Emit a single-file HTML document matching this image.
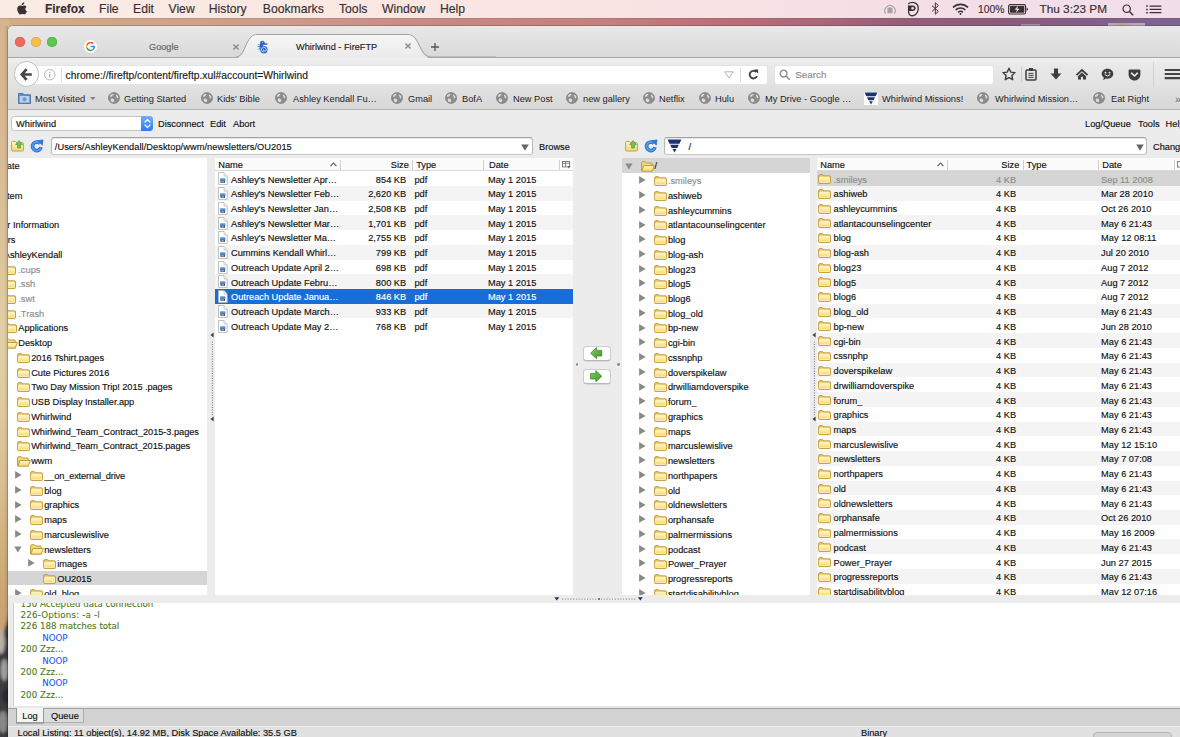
<!DOCTYPE html>
<html><head><meta charset="utf-8"><title>Whirlwind - FireFTP</title>
<style>
html,body{margin:0;padding:0}
body{width:1180px;height:737px;overflow:hidden;position:relative;background:#c59a92;font-family:"Liberation Sans",sans-serif;font-size:9.25px;color:#111;-webkit-font-smoothing:antialiased}
div,span,svg{position:absolute;white-space:nowrap}
.ic{overflow:visible}
#desk{left:0;top:0;width:1180px;height:737px;background:linear-gradient(90deg,#d1ad88 0,#cfa58a 150px,#cb9a8c 300px,#c88a86 420px,#c4807f 600px,#b56d78 750px,#a8667a 830px,#955e79 900px,#8a5c7c 1000px,#82608a 1100px,#7b6690 1180px)}
#wood{left:0;top:17.6px;width:9px;height:720px;background:linear-gradient(180deg,#d6b48d 0,#d8b992 110px,#dcc39b 230px,#e3cfa6 320px,#dfc89e 400px,#d8bd90 470px,#cfab76 550px,#c9a274 600px,#c9a274 720px)}
#gl{left:0;top:17.6px;width:1180px;height:1.6px;background:linear-gradient(180deg,rgba(110,50,40,.28),rgba(110,50,40,0))}
#wsh{left:4px;top:26px;width:4px;height:711px;background:linear-gradient(90deg,rgba(0,0,0,0),rgba(0,0,0,.13))}
#menubar{left:0;top:0;width:1180px;height:17.6px;background:linear-gradient(90deg,#faece4 0,#fae7e2 400px,#f8e2e3 700px,#f4dfe6 900px,#f1deea 1180px);font-size:12.2px;color:#372f31;-webkit-text-stroke:0.15px #372f31}
#menubar span{top:2px;line-height:14px}
#win{left:8px;top:25.6px;width:1180px;height:720px;background:#ececec;border-radius:5px 0 0 0;box-shadow:0 0 0 .5px rgba(0,0,0,.35)}
#tabbar{left:8px;top:25.6px;width:1172px;height:31.4px;border-radius:5px 0 0 0;background:linear-gradient(180deg,#e9e9e9,#d9d9d9);border-bottom:1px solid #a9a9a9}
#navbar{left:8px;top:58px;width:1172px;height:51px;background:linear-gradient(180deg,#f0f0f0 0,#e9e9e9 16%,#e2e2e2 55%,#d7d7d7 100%);border-bottom:1px solid #b5b5b5}
.tl{width:9.9px;height:9.9px;border-radius:50%;top:37px}
.field{background:#fff;border:1px solid #c3c3c3;border-radius:3px;box-sizing:border-box}
.bm{top:93px;line-height:12px;font-size:9.25px;color:#1d1d1d}
.t{line-height:12px;height:12px;-webkit-text-stroke:0.15px currentColor}
.g{color:#8e8e8e}
.row{left:0;height:14.74px;width:100%}
.pane{background:#fff;overflow:hidden}
.hdr{background:#fbfbfb;border-bottom:1px solid #d9d9d9;box-sizing:border-box}
.sep{width:1px;background:#d0d0d0}
.log{font-family:"DejaVu Sans","Liberation Sans",sans-serif;font-size:8.7px;line-height:11px;-webkit-text-stroke:0.12px currentColor}
</style></head><body>
<svg width="0" height="0" style="left:0;top:0"><defs>
<linearGradient id="fg" x1="0" y1="0" x2="0" y2="1"><stop offset="0" stop-color="#fff8cc"/><stop offset="0.5" stop-color="#fbe99a"/><stop offset="1" stop-color="#f6d874"/></linearGradient>
<linearGradient id="ag" x1="0" y1="0" x2="1" y2="1"><stop offset="0" stop-color="#8fce74"/><stop offset="0.5" stop-color="#5fb045"/><stop offset="1" stop-color="#4a9a33"/></linearGradient>
</defs></svg>
<div id="desk"></div><div id="wood"></div>
<svg style="left:0;top:590px" width="9" height="147" viewBox="0 0 9 147"><defs><filter id="bl" x="-50%" y="-10%" width="200%" height="120%"><feGaussianBlur stdDeviation="1.6"/></filter></defs>
<g filter="url(#bl)"><polygon points="12,18 -3,64 -3,160 12,160" fill="#3b3b3f"/><ellipse cx="1" cy="52" rx="4" ry="12" fill="#b7afa4"/><ellipse cx="4.5" cy="80" rx="4" ry="11" fill="#a3a19f"/><ellipse cx="6" cy="106" rx="4" ry="8" fill="#2c2c30"/><ellipse cx="3" cy="132" rx="5" ry="11" fill="#8a8987"/></g></svg>
<div id="wsh"></div><div id="gl"></div>

<div id="menubar">
<svg class="ic" style="left:16.2px;top:2px" width="12" height="14" viewBox="0 0 12 14"><path d="M8.3 0.2C8.4 1.2 7.9 2 7.4 2.5C6.9 3 6.2 3.4 5.6 3.3C5.5 2.4 6 1.6 6.4 1.2C6.9 0.7 7.7 0.3 8.3 0.2ZM10.6 4.9C10.4 5 9.3 5.6 9.3 7C9.3 8.6 10.8 9.2 10.9 9.2C10.9 9.3 10.6 10.2 10 11C9.5 11.7 9 12.4 8.2 12.4C7.4 12.4 7.2 12 6.3 12C5.4 12 5.1 12.4 4.4 12.4C3.6 12.4 3.1 11.7 2.5 10.9C1.8 9.9 1.2 8.4 1.2 7C1.2 4.7 2.7 3.5 4.1 3.5C4.9 3.5 5.6 4 6.1 4C6.6 4 7.4 3.4 8.3 3.4C8.7 3.4 9.9 3.5 10.6 4.9Z" fill="#3a3134"/></svg>
<span style="left:45px;font-weight:bold;font-size:11.9px;">Firefox</span>
<span style="left:99px;">File</span>
<span style="left:133px;">Edit</span>
<span style="left:168.5px;">View</span>
<span style="left:208.8px;">History</span>
<span style="left:262.8px;">Bookmarks</span>
<span style="left:339px;">Tools</span>
<span style="left:382px;">Window</span>
<span style="left:440px;">Help</span>
<span style="left:978px;font-size:10.3px;top:2.6px">100%</span>
<span style="left:1039.5px;font-size:11.8px">Thu 3:23 PM</span>
<svg class="ic" style="left:884px;top:3px" width="12" height="12" viewBox="0 0 12 12"><path d="M1.6 10.6A5.2 5.2 0 1 1 10.4 10.6" fill="none" stroke="#a89fa5" stroke-width="1.1"/><rect x="3.4" y="4.6" width="5.2" height="5.6" rx="0.8" fill="#aaa1a7"/></svg>
<svg class="ic" style="left:906px;top:1px" width="14" height="16" viewBox="0 0 14 16"><path d="M2.2 3C5 0.6 10.6 0.8 12 5C13.2 9 11 13.6 7.4 14.6C4.6 15.2 2.6 13.6 2.6 11V4.6" fill="none" stroke="#3a3134" stroke-width="1.3"/><path d="M2.4 4.4H6.4C8.6 4.4 9.6 5.6 9.6 7.2C9.6 8.8 8.4 10 6.4 10H2.6Z" fill="#3a3134"/><circle cx="6.6" cy="7.2" r="1.3" fill="#f3dfe6"/></svg>
<svg class="ic" style="left:931px;top:2.4px" width="9" height="13" viewBox="0 0 9 13"><path d="M1 3.6L7.4 9.4L4.3 12.2V0.8L7.4 3.6L1 9.4" fill="none" stroke="#3a3134" stroke-width="1"/></svg>
<svg class="ic" style="left:952px;top:2.6px" width="17" height="12" viewBox="0 0 17 12"><path d="M1 4.4A10.6 10.6 0 0 1 16 4.4" fill="none" stroke="#3a3134" stroke-width="1.7"/><path d="M3.6 7A7 7 0 0 1 13.4 7" fill="none" stroke="#3a3134" stroke-width="1.7"/><path d="M6.1 9.4A3.5 3.5 0 0 1 10.9 9.4" fill="none" stroke="#3a3134" stroke-width="1.6"/><circle cx="8.5" cy="11" r="1" fill="#3a3134"/></svg>
<svg class="ic" style="left:1008px;top:3.6px" width="21" height="11" viewBox="0 0 21 11"><rect x="0.6" y="0.6" width="17" height="9.4" rx="1.6" fill="none" stroke="#3a3134" stroke-width="1.1"/><rect x="1.9" y="1.9" width="14.4" height="6.8" rx="0.6" fill="#3a3134"/><path d="M18.6 3.6V7Q20 6.6 20 5.3Q20 4 18.6 3.6Z" fill="#3a3134"/><path d="M10.2 1.6L6.6 5.8H9L7.8 9L11.6 4.8H9.2Z" fill="#f3dfe6"/></svg>
<svg class="ic" style="left:1122px;top:3.6px" width="12" height="12" viewBox="0 0 12 12"><circle cx="4.7" cy="4.7" r="3.7" fill="none" stroke="#3a3134" stroke-width="1.2"/><path d="M7.4 7.4L11.2 11.2" stroke="#3a3134" stroke-width="1.4"/></svg>
<svg class="ic" style="left:1146px;top:4.6px" width="16" height="9" viewBox="0 0 16 9"><path d="M3.6 1.1H15.4M3.6 4.4H15.4M3.6 7.7H15.4" stroke="#3a3134" stroke-width="1.3"/><path d="M0.2 1.1H1.8M0.2 4.4H1.8M0.2 7.7H1.8" stroke="#3a3134" stroke-width="1.5"/></svg>
</div>
<div style="left:1021px;top:23.6px;width:19px;height:2px;background:rgba(255,255,255,.28)"></div><div style="left:1108px;top:22.8px;width:37px;height:2.8px;background:linear-gradient(90deg,#f3eee9,#e9d9a8 40%,#f1ece6 70%,#eee);opacity:.5"></div>
<div id="win"></div><div id="tabbar"></div><div id="navbar"></div>
<div class="tl" style="left:14.8px;background:#ec6b60;box-shadow:inset 0 0 0 .5px #d55146"></div>
<div class="tl" style="left:31.1px;background:#f4bf4f;box-shadow:inset 0 0 0 .5px #d9a13b"></div>
<div class="tl" style="left:47.4px;background:#61c454;box-shadow:inset 0 0 0 .5px #4aa73c"></div>
<svg class="ic" style="left:236px;top:33px" width="260" height="25" viewBox="0 0 260 25"><defs><linearGradient id="tg" x1="0" y1="0" x2="0" y2="1"><stop offset="0" stop-color="#f6f6f6"/><stop offset="1" stop-color="#ebebeb"/></linearGradient></defs><path d="M0 24C10 24 9 1.5 21 1.5H172C184 1.5 183 24 195 24H260" fill="none" stroke="#a0a0a0" stroke-width="1"/><path d="M1 25C10.6 24.4 9.8 2 21 2H172C183.2 2 182.4 24.4 194 25Z" fill="url(#tg)"/></svg>
<svg class="ic" style="left:84px;top:40px" width="13" height="13" viewBox="0 0 13 13"><circle cx="6.5" cy="6.5" r="6.5" fill="#fff"/><path d="M6.5 2.6A3.9 3.9 0 0 0 3 4.8" stroke="#ea4335" stroke-width="1.5" fill="none"/><path d="M3 4.8A3.9 3.9 0 0 0 3 8.2" stroke="#fbbc05" stroke-width="1.5" fill="none"/><path d="M3 8.2A3.9 3.9 0 0 0 9 9.5" stroke="#34a853" stroke-width="1.5" fill="none"/><path d="M9 9.5A3.9 3.9 0 0 0 10.3 6.5H6.6" stroke="#4285f4" stroke-width="1.5" fill="none"/><path d="M6.5 2.6A3.9 3.9 0 0 1 9.2 3.7" stroke="#ea4335" stroke-width="1.5" fill="none"/></svg>
<span class="t" style="left:149px;top:41px;color:#666;font-size:9.2px">Google</span>
<svg class="ic" style="left:233px;top:43.6px" width="6" height="6" viewBox="0 0 6 6"><path d="M0.4 0.4L5.6 5.6M5.6 0.4L0.4 5.6" stroke="#8c8c8c" stroke-width="1.4"/></svg>
<svg class="ic" style="left:255.6px;top:39.8px" width="12" height="14" viewBox="0 0 12 14"><g fill="#2b68c2"><circle cx="7.9" cy="9.7" r="3.7"/><ellipse cx="6.3" cy="2.8" rx="2.3" ry="2.1"/><path d="M7.5 2.4L11.7 3.7L11.2 4.8L7.2 4.7Z"/><path d="M4.1 3.4C3.5 5.4 3.9 7.6 5 8.8L7.8 6.4C6.9 5.8 7 4.8 7.7 4.3Z"/><path d="M4 4.4L1.4 3.9L3.8 5.6ZM3.9 6.1L0.8 6.6L4 7.4ZM4.3 8L1.4 9.3L4.9 9.4Z"/></g><path d="M7.9 12.1A2.4 2.4 0 1 1 10.2 9.2A1.4 1.4 0 1 1 7.6 9.4" fill="none" stroke="#d5e6f9" stroke-width="0.85"/><circle cx="6.6" cy="2.3" r="0.5" fill="#d5e6f9"/></svg>
<span class="t" style="left:296px;top:41px;color:#222;font-size:9.2px">Whirlwind - FireFTP</span>
<svg class="ic" style="left:405.2px;top:43.4px" width="6" height="6" viewBox="0 0 6 6"><path d="M0.4 0.4L5.6 5.6M5.6 0.4L0.4 5.6" stroke="#8c8c8c" stroke-width="1.4"/></svg>
<svg class="ic" style="left:431px;top:43.3px" width="8" height="8" viewBox="0 0 8 8"><path d="M4 0V8M0 4H8" stroke="#555" stroke-width="1.3"/></svg>
<div class="field" style="left:26px;top:64.5px;width:742px;height:20px;border-radius:0 3px 3px 0;border-color:#e4e4e4"></div>
<div style="left:13.5px;top:61.3px;width:25.4px;height:25.4px;border-radius:50%;background:#fcfcfc;border:1px solid #c0c0c0;box-sizing:border-box"></div>
<svg class="ic" style="left:19.6px;top:68px" width="12" height="13" viewBox="0 0 12 13"><path d="M6.6 1.2L1.8 6.5L6.6 11.8M2.4 6.5H11.8" stroke="#474747" stroke-width="2.7" fill="none" stroke-linecap="butt" stroke-linejoin="miter"/></svg>
<svg class="ic" style="left:44px;top:69px" width="12" height="12" viewBox="0 0 12 12"><circle cx="5.8" cy="5.7" r="5.2" fill="none" stroke="#a2a2a2" stroke-width="0.8"/><rect x="5.3" y="4.8" width="1.1" height="3.8" fill="#a2a2a2"/><rect x="5.3" y="2.8" width="1.1" height="1.2" fill="#a2a2a2"/></svg>
<div class="sep" style="left:60.5px;top:68px;height:13.5px;background:#dcdcdc"></div>
<span class="t" style="left:65.6px;top:69.5px;font-size:10.3px;color:#1a1a1a">chrome://fireftp/content/fireftp.xul#account=Whirlwind</span>
<svg class="ic" style="left:724px;top:71px" width="10" height="8" viewBox="0 0 10 8"><path d="M0.8 0.8H9.2L5 7Z" fill="none" stroke="#b5b5b5" stroke-width="1"/></svg>
<div class="sep" style="left:740px;top:68px;height:13.5px;background:#d8d8d8"></div>
<svg class="ic" style="left:748.4px;top:69.2px" width="11" height="11" viewBox="0 0 11 11"><path d="M8.2 3A3.8 3.8 0 1 0 9 7" fill="none" stroke="#434343" stroke-width="1.9"/><path d="M5.8 0.4H10.2V4.8Z" fill="#434343"/></svg>
<div class="field" style="left:774px;top:64.5px;width:220px;height:20px;border-color:#e4e4e4"></div>
<svg class="ic" style="left:779px;top:69px" width="12" height="12" viewBox="0 0 12 12"><circle cx="4.6" cy="4.6" r="3.4" fill="none" stroke="#8c8c8c" stroke-width="1.3"/><path d="M7.2 7.2L10.8 10.8" stroke="#8c8c8c" stroke-width="1.6"/></svg>
<span class="t" style="left:795.3px;top:69.1px;font-size:9.8px;color:#8a8a8a">Search</span>
<svg class="ic" style="left:1002px;top:67px" width="14" height="14" viewBox="0 0 14 14"><path d="M7 1.2L8.8 5.1L13 5.6L9.9 8.5L10.7 12.7L7 10.6L3.3 12.7L4.1 8.5L1 5.6L5.2 5.1Z" fill="none" stroke="#3e3e3e" stroke-width="1.4" stroke-linejoin="round"/></svg>
<div class="sep" style="left:1021px;top:67px;height:15px;background:#ccc"></div>
<svg class="ic" style="left:1025px;top:67px" width="12" height="14" viewBox="0 0 12 14"><rect x="1" y="3" width="10" height="10" rx="1" fill="none" stroke="#3e3e3e" stroke-width="1.5"/><rect x="4" y="1" width="4" height="3" fill="#3e3e3e"/><path d="M3.4 6.4H8.6M3.4 8.4H8.6M3.4 10.4H8.6" stroke="#3e3e3e" stroke-width="1"/></svg>
<svg class="ic" style="left:1050px;top:68px" width="12" height="13" viewBox="0 0 12 13"><path d="M4 0.5H8V5.5H11.4L6 11.6L0.6 5.5H4Z" fill="#3e3e3e"/></svg>
<svg class="ic" style="left:1075px;top:68px" width="14" height="12" viewBox="0 0 14 12"><path d="M7 0.8L0.8 6.6L2 7.8L7 3.2L12 7.8L13.2 6.6ZM7 4.6L3 8.2V11.6H6V8.8H8V11.6H11V8.2Z" fill="#3e3e3e"/></svg>
<svg class="ic" style="left:1101px;top:68px" width="13" height="13" viewBox="0 0 13 13"><path d="M6.5 0.8C9.8 0.8 12.3 3 12.3 5.8C12.3 8.6 9.8 10.8 6.5 10.8C5.9 10.8 5.3 10.7 4.8 10.6L2.2 12.2L2.8 9.6C1.5 8.7 0.7 7.3 0.7 5.8C0.7 3 3.2 0.8 6.5 0.8Z" fill="#3e3e3e"/><circle cx="4.5" cy="4.6" r="0.9" fill="#ececec"/><circle cx="8.5" cy="4.6" r="0.9" fill="#ececec"/><path d="M3.8 6.6Q6.5 9.4 9.2 6.6" fill="none" stroke="#ececec" stroke-width="1"/></svg>
<svg class="ic" style="left:1128px;top:69px" width="13" height="12" viewBox="0 0 13 12"><path d="M1.6 0.6H11.4Q12.4 0.6 12.4 1.6V5.4C12.4 8.8 9.8 11.4 6.5 11.4C3.2 11.4 0.6 8.8 0.6 5.4V1.6Q0.6 0.6 1.6 0.6Z" fill="#3e3e3e"/><path d="M3.6 4.2L6.5 7L9.4 4.2" fill="none" stroke="#ececec" stroke-width="1.6" stroke-linecap="round" stroke-linejoin="round"/></svg>
<div class="sep" style="left:1153px;top:62px;height:25px;background:#d2d2d2"></div>
<svg class="ic" style="left:1164px;top:68px" width="16" height="12" viewBox="0 0 16 12"><path d="M0.7 2H16M0.7 6.05H16M0.7 10.1H16" stroke="#434343" stroke-width="2.1"/></svg>
<svg class="ic" style="left:18px;top:92px" width="13" height="12" viewBox="0 0 13 12"><path d="M0.5 11.5V1.5H5L6 2.8H12.5V11.5Z" fill="#5e8fd0" stroke="#3c68a6" stroke-width="0.8"/><rect x="1.6" y="4" width="9.8" height="6.6" fill="#b8d0ee"/><circle cx="6.5" cy="7.3" r="2" fill="#6d99d4"/></svg>
<span class="bm" style="left:35px">Most Visited</span>
<svg class="ic" style="left:90.4px;top:96.8px" width="5.6" height="3.2" viewBox="0 0 7 4"><path d="M0 0H7L3.5 4Z" fill="#858585"/></svg>
<svg class="ic" style="left:108px;top:91.9px" width="12" height="12" viewBox="0 0 12 12"><circle cx="6" cy="6" r="5.8" fill="#8d8d8d"/><path d="M2 3.6Q3.4 1.6 5.2 1.8Q5.8 3 4.6 3.6Q4 4.8 2.6 5Q1.8 4.6 2 3.6ZM8 2.4Q9.8 3 10.6 5Q10.2 6.4 9.2 6.6Q8.4 5.6 8.6 4.6Q7.4 3.6 8 2.4ZM3 6.8Q4.8 6.2 6 7.4Q6.6 8.8 5.4 10.2Q4 10.4 3 9.2Q2.4 8 3 6.8Z" fill="#dcdcdc"/><circle cx="6" cy="6" r="5.4" fill="none" stroke="#7d7d7d" stroke-width="0.8" opacity="0.7"/></svg>
<span class="bm" style="left:124px">Getting Started</span>
<svg class="ic" style="left:201px;top:91.9px" width="12" height="12" viewBox="0 0 12 12"><circle cx="6" cy="6" r="5.8" fill="#8d8d8d"/><path d="M2 3.6Q3.4 1.6 5.2 1.8Q5.8 3 4.6 3.6Q4 4.8 2.6 5Q1.8 4.6 2 3.6ZM8 2.4Q9.8 3 10.6 5Q10.2 6.4 9.2 6.6Q8.4 5.6 8.6 4.6Q7.4 3.6 8 2.4ZM3 6.8Q4.8 6.2 6 7.4Q6.6 8.8 5.4 10.2Q4 10.4 3 9.2Q2.4 8 3 6.8Z" fill="#dcdcdc"/><circle cx="6" cy="6" r="5.4" fill="none" stroke="#7d7d7d" stroke-width="0.8" opacity="0.7"/></svg>
<span class="bm" style="left:217px">Kids' Bible</span>
<svg class="ic" style="left:275px;top:91.9px" width="12" height="12" viewBox="0 0 12 12"><circle cx="6" cy="6" r="5.8" fill="#8d8d8d"/><path d="M2 3.6Q3.4 1.6 5.2 1.8Q5.8 3 4.6 3.6Q4 4.8 2.6 5Q1.8 4.6 2 3.6ZM8 2.4Q9.8 3 10.6 5Q10.2 6.4 9.2 6.6Q8.4 5.6 8.6 4.6Q7.4 3.6 8 2.4ZM3 6.8Q4.8 6.2 6 7.4Q6.6 8.8 5.4 10.2Q4 10.4 3 9.2Q2.4 8 3 6.8Z" fill="#dcdcdc"/><circle cx="6" cy="6" r="5.4" fill="none" stroke="#7d7d7d" stroke-width="0.8" opacity="0.7"/></svg>
<span class="bm" style="left:293px">Ashley Kendall Fu…</span>
<svg class="ic" style="left:391px;top:91.9px" width="12" height="12" viewBox="0 0 12 12"><circle cx="6" cy="6" r="5.8" fill="#8d8d8d"/><path d="M2 3.6Q3.4 1.6 5.2 1.8Q5.8 3 4.6 3.6Q4 4.8 2.6 5Q1.8 4.6 2 3.6ZM8 2.4Q9.8 3 10.6 5Q10.2 6.4 9.2 6.6Q8.4 5.6 8.6 4.6Q7.4 3.6 8 2.4ZM3 6.8Q4.8 6.2 6 7.4Q6.6 8.8 5.4 10.2Q4 10.4 3 9.2Q2.4 8 3 6.8Z" fill="#dcdcdc"/><circle cx="6" cy="6" r="5.4" fill="none" stroke="#7d7d7d" stroke-width="0.8" opacity="0.7"/></svg>
<span class="bm" style="left:408px">Gmail</span>
<svg class="ic" style="left:445px;top:91.9px" width="12" height="12" viewBox="0 0 12 12"><circle cx="6" cy="6" r="5.8" fill="#8d8d8d"/><path d="M2 3.6Q3.4 1.6 5.2 1.8Q5.8 3 4.6 3.6Q4 4.8 2.6 5Q1.8 4.6 2 3.6ZM8 2.4Q9.8 3 10.6 5Q10.2 6.4 9.2 6.6Q8.4 5.6 8.6 4.6Q7.4 3.6 8 2.4ZM3 6.8Q4.8 6.2 6 7.4Q6.6 8.8 5.4 10.2Q4 10.4 3 9.2Q2.4 8 3 6.8Z" fill="#dcdcdc"/><circle cx="6" cy="6" r="5.4" fill="none" stroke="#7d7d7d" stroke-width="0.8" opacity="0.7"/></svg>
<span class="bm" style="left:462px">BofA</span>
<svg class="ic" style="left:496px;top:91.9px" width="12" height="12" viewBox="0 0 12 12"><circle cx="6" cy="6" r="5.8" fill="#8d8d8d"/><path d="M2 3.6Q3.4 1.6 5.2 1.8Q5.8 3 4.6 3.6Q4 4.8 2.6 5Q1.8 4.6 2 3.6ZM8 2.4Q9.8 3 10.6 5Q10.2 6.4 9.2 6.6Q8.4 5.6 8.6 4.6Q7.4 3.6 8 2.4ZM3 6.8Q4.8 6.2 6 7.4Q6.6 8.8 5.4 10.2Q4 10.4 3 9.2Q2.4 8 3 6.8Z" fill="#dcdcdc"/><circle cx="6" cy="6" r="5.4" fill="none" stroke="#7d7d7d" stroke-width="0.8" opacity="0.7"/></svg>
<span class="bm" style="left:513px">New Post</span>
<svg class="ic" style="left:566px;top:91.9px" width="12" height="12" viewBox="0 0 12 12"><circle cx="6" cy="6" r="5.8" fill="#8d8d8d"/><path d="M2 3.6Q3.4 1.6 5.2 1.8Q5.8 3 4.6 3.6Q4 4.8 2.6 5Q1.8 4.6 2 3.6ZM8 2.4Q9.8 3 10.6 5Q10.2 6.4 9.2 6.6Q8.4 5.6 8.6 4.6Q7.4 3.6 8 2.4ZM3 6.8Q4.8 6.2 6 7.4Q6.6 8.8 5.4 10.2Q4 10.4 3 9.2Q2.4 8 3 6.8Z" fill="#dcdcdc"/><circle cx="6" cy="6" r="5.4" fill="none" stroke="#7d7d7d" stroke-width="0.8" opacity="0.7"/></svg>
<span class="bm" style="left:583px">new gallery</span>
<svg class="ic" style="left:643px;top:91.9px" width="12" height="12" viewBox="0 0 12 12"><circle cx="6" cy="6" r="5.8" fill="#8d8d8d"/><path d="M2 3.6Q3.4 1.6 5.2 1.8Q5.8 3 4.6 3.6Q4 4.8 2.6 5Q1.8 4.6 2 3.6ZM8 2.4Q9.8 3 10.6 5Q10.2 6.4 9.2 6.6Q8.4 5.6 8.6 4.6Q7.4 3.6 8 2.4ZM3 6.8Q4.8 6.2 6 7.4Q6.6 8.8 5.4 10.2Q4 10.4 3 9.2Q2.4 8 3 6.8Z" fill="#dcdcdc"/><circle cx="6" cy="6" r="5.4" fill="none" stroke="#7d7d7d" stroke-width="0.8" opacity="0.7"/></svg>
<span class="bm" style="left:659px">Netflix</span>
<svg class="ic" style="left:699px;top:91.9px" width="12" height="12" viewBox="0 0 12 12"><circle cx="6" cy="6" r="5.8" fill="#8d8d8d"/><path d="M2 3.6Q3.4 1.6 5.2 1.8Q5.8 3 4.6 3.6Q4 4.8 2.6 5Q1.8 4.6 2 3.6ZM8 2.4Q9.8 3 10.6 5Q10.2 6.4 9.2 6.6Q8.4 5.6 8.6 4.6Q7.4 3.6 8 2.4ZM3 6.8Q4.8 6.2 6 7.4Q6.6 8.8 5.4 10.2Q4 10.4 3 9.2Q2.4 8 3 6.8Z" fill="#dcdcdc"/><circle cx="6" cy="6" r="5.4" fill="none" stroke="#7d7d7d" stroke-width="0.8" opacity="0.7"/></svg>
<span class="bm" style="left:715px">Hulu</span>
<svg class="ic" style="left:748px;top:91.9px" width="12" height="12" viewBox="0 0 12 12"><circle cx="6" cy="6" r="5.8" fill="#8d8d8d"/><path d="M2 3.6Q3.4 1.6 5.2 1.8Q5.8 3 4.6 3.6Q4 4.8 2.6 5Q1.8 4.6 2 3.6ZM8 2.4Q9.8 3 10.6 5Q10.2 6.4 9.2 6.6Q8.4 5.6 8.6 4.6Q7.4 3.6 8 2.4ZM3 6.8Q4.8 6.2 6 7.4Q6.6 8.8 5.4 10.2Q4 10.4 3 9.2Q2.4 8 3 6.8Z" fill="#dcdcdc"/><circle cx="6" cy="6" r="5.4" fill="none" stroke="#7d7d7d" stroke-width="0.8" opacity="0.7"/></svg>
<span class="bm" style="left:765px">My Drive - Google …</span>
<svg class="ic" style="left:977px;top:91.9px" width="12" height="12" viewBox="0 0 12 12"><circle cx="6" cy="6" r="5.8" fill="#8d8d8d"/><path d="M2 3.6Q3.4 1.6 5.2 1.8Q5.8 3 4.6 3.6Q4 4.8 2.6 5Q1.8 4.6 2 3.6ZM8 2.4Q9.8 3 10.6 5Q10.2 6.4 9.2 6.6Q8.4 5.6 8.6 4.6Q7.4 3.6 8 2.4ZM3 6.8Q4.8 6.2 6 7.4Q6.6 8.8 5.4 10.2Q4 10.4 3 9.2Q2.4 8 3 6.8Z" fill="#dcdcdc"/><circle cx="6" cy="6" r="5.4" fill="none" stroke="#7d7d7d" stroke-width="0.8" opacity="0.7"/></svg>
<span class="bm" style="left:995px">Whirlwind Mission…</span>
<svg class="ic" style="left:1093px;top:91.9px" width="12" height="12" viewBox="0 0 12 12"><circle cx="6" cy="6" r="5.8" fill="#8d8d8d"/><path d="M2 3.6Q3.4 1.6 5.2 1.8Q5.8 3 4.6 3.6Q4 4.8 2.6 5Q1.8 4.6 2 3.6ZM8 2.4Q9.8 3 10.6 5Q10.2 6.4 9.2 6.6Q8.4 5.6 8.6 4.6Q7.4 3.6 8 2.4ZM3 6.8Q4.8 6.2 6 7.4Q6.6 8.8 5.4 10.2Q4 10.4 3 9.2Q2.4 8 3 6.8Z" fill="#dcdcdc"/><circle cx="6" cy="6" r="5.4" fill="none" stroke="#7d7d7d" stroke-width="0.8" opacity="0.7"/></svg>
<span class="bm" style="left:1111px">Eat Right</span>
<svg class="ic" style="left:864px;top:91.6px" width="14" height="13" viewBox="0 0 15 14"><rect width="15" height="14" fill="#fff"/><path d="M0.6 0.6H14.4L12.5 4.7H2.5ZM3.2 5.7H11.8L10.3 8.9H4.7ZM5.5 9.9H9.5L7.5 13.5Z" fill="#1d3272"/></svg>
<span class="bm" style="left:882px">Whirlwind Missions!</span>
<span class="bm" style="left:1175px;color:#666;font-size:11px">»</span>
<div class="field" style="left:10.6px;top:116.2px;width:142.6px;height:14.8px;border-color:#c4c4c4;border-radius:3.5px"></div>
<div style="left:141px;top:116.2px;width:12.2px;height:14.8px;border-radius:0 3.5px 3.5px 0;background:linear-gradient(180deg,#6cb0fb,#2a7bf3)"></div>
<svg class="ic" style="left:143.8px;top:118.2px" width="7" height="11" viewBox="0 0 7 11"><path d="M1 4L3.5 1.4L6 4M1 7L3.5 9.6L6 7" fill="none" stroke="#fff" stroke-width="1.2" stroke-linecap="round" stroke-linejoin="round"/></svg>
<span class="t" style="left:16px;top:117.7px">Whirlwind</span>
<span class="t" style="left:158px;top:117.7px">Disconnect</span>
<span class="t" style="left:210px;top:117.7px">Edit</span>
<span class="t" style="left:233px;top:117.7px">Abort</span>
<span class="t" style="left:1085px;top:117.7px">Log/Queue</span>
<span class="t" style="left:1138px;top:117.7px">Tools</span>
<span class="t" style="left:1165.6px;top:117.7px">Help</span>
<svg class="ic" style="left:10.8px;top:140.2px" width="14" height="12" viewBox="0 0 14 12"><path d="M0.6 10V2.4Q0.6 1.4 1.6 1.4H4.4L5.6 2.6H11.4Q12.4 2.6 12.4 3.6V10Q12.4 11 11.4 11H1.6Q0.6 11 0.6 10Z" fill="url(#fg)" stroke="#c79f45" stroke-width="1"/><path d="M8 0.6L11.4 4.4H9.4V8H6.6V4.4H4.6Z" fill="#78c45a" stroke="#459632" stroke-width="0.7" stroke-linejoin="round"/></svg>
<svg class="ic" style="left:30.2px;top:139.4px" width="14" height="14" viewBox="0 0 14 14"><path d="M10.1 4.5A4.3 4.3 0 1 0 11 8.2" fill="none" stroke="#1d64c8" stroke-width="3.6" stroke-linecap="butt"/><path d="M10.1 4.5A4.3 4.3 0 1 0 11 8.2" fill="none" stroke="#4b9af0" stroke-width="2.2" stroke-linecap="butt"/><path d="M8 1.6L13 0.9L12.3 6.2Z" fill="#2a78dc" stroke="#1d64c8" stroke-width="0.6" stroke-linejoin="round"/></svg>
<div class="field" style="left:51px;top:137.2px;width:482px;height:18.3px;border-top-width:1.4px;border-color:#a2a2a2 #b9b9b9 #c6c6c6;border-radius:3px;box-shadow:inset 0 1px 1px rgba(0,0,0,.10)"></div>
<span class="t" style="left:54.8px;top:140.8px;letter-spacing:0.050px">/Users/AshleyKendall/Desktop/wwm/newsletters/OU2015</span>
<svg class="ic" style="left:521px;top:144px" width="8" height="7" viewBox="0 0 8 7"><path d="M0.2 0.4H7.8L4 6.8Z" fill="#666"/></svg>
<span class="t" style="left:539px;top:140.8px">Browse</span>
<svg class="ic" style="left:624.8px;top:140px" width="14" height="12" viewBox="0 0 14 12"><path d="M0.6 10V2.4Q0.6 1.4 1.6 1.4H4.4L5.6 2.6H11.4Q12.4 2.6 12.4 3.6V10Q12.4 11 11.4 11H1.6Q0.6 11 0.6 10Z" fill="url(#fg)" stroke="#c79f45" stroke-width="1"/><path d="M8 0.6L11.4 4.4H9.4V8H6.6V4.4H4.6Z" fill="#78c45a" stroke="#459632" stroke-width="0.7" stroke-linejoin="round"/></svg>
<svg class="ic" style="left:644.2px;top:139.3px" width="14" height="14" viewBox="0 0 14 14"><path d="M10.1 4.5A4.3 4.3 0 1 0 11 8.2" fill="none" stroke="#1d64c8" stroke-width="3.6" stroke-linecap="butt"/><path d="M10.1 4.5A4.3 4.3 0 1 0 11 8.2" fill="none" stroke="#4b9af0" stroke-width="2.2" stroke-linecap="butt"/><path d="M8 1.6L13 0.9L12.3 6.2Z" fill="#2a78dc" stroke="#1d64c8" stroke-width="0.6" stroke-linejoin="round"/></svg>
<div class="field" style="left:664.3px;top:137.2px;width:482.5px;height:18.3px;border-top-width:1.4px;border-color:#a2a2a2 #b9b9b9 #c6c6c6;border-radius:3px;box-shadow:inset 0 1px 1px rgba(0,0,0,.10)"></div>
<svg class="ic" style="left:666.8px;top:139.4px" width="15" height="14" viewBox="0 0 15 14"><rect width="15" height="14" fill="#fff"/><path d="M0.6 0.6H14.4L12.5 4.7H2.5ZM3.2 5.7H11.8L10.3 8.9H4.7ZM5.5 9.9H9.5L7.5 13.5Z" fill="#1d3272"/></svg>
<span class="t" style="left:688.4px;top:140.8px">/</span>
<svg class="ic" style="left:1135.6px;top:144px" width="8" height="7" viewBox="0 0 8 7"><path d="M0.2 0.4H7.8L4 6.8Z" fill="#666"/></svg>
<span class="t" style="left:1153px;top:140.8px">Change</span>
<div class="pane" style="left:8px;top:158.0px;width:199px;height:437px">
<span class="t" style="right:187.4px;top:2.40px">private</span>
<span class="t" style="right:184.6px;top:31.87px">System</span>
<span class="t" style="right:147.8px;top:61.34px">User Information</span>
<span class="t" style="right:191.6px;top:76.08px">Users</span>
<span class="t" style="right:144.6px;top:90.81px">AshleyKendall</span>
<svg class="ic" style="left:-4.7px;top:106.545px" width="13.1" height="10.2" viewBox="0 0 13.6 10.4" preserveAspectRatio="none"><path d="M0.7 8.8V1.7Q0.7 0.7 1.7 0.7H4.8L6 1.9H11.9Q12.9 1.9 12.9 2.9V8.8Q12.9 9.7 11.9 9.7H1.7Q0.7 9.7 0.7 8.8Z" fill="#ebc662" stroke="#c09838" stroke-width="1"/><rect x="1.7" y="3.2" width="10.2" height="5.6" rx="0.6" fill="url(#fg)" stroke="#fffbe4" stroke-width="0.7"/></svg><span class="t g" style="left:10.3px;top:105.55px">.cups</span>
<svg class="ic" style="left:-4.7px;top:121.28px" width="13.1" height="10.2" viewBox="0 0 13.6 10.4" preserveAspectRatio="none"><path d="M0.7 8.8V1.7Q0.7 0.7 1.7 0.7H4.8L6 1.9H11.9Q12.9 1.9 12.9 2.9V8.8Q12.9 9.7 11.9 9.7H1.7Q0.7 9.7 0.7 8.8Z" fill="#ebc662" stroke="#c09838" stroke-width="1"/><rect x="1.7" y="3.2" width="10.2" height="5.6" rx="0.6" fill="url(#fg)" stroke="#fffbe4" stroke-width="0.7"/></svg><span class="t g" style="left:10.3px;top:120.28px">.ssh</span>
<svg class="ic" style="left:-4.7px;top:136.01500000000001px" width="13.1" height="10.2" viewBox="0 0 13.6 10.4" preserveAspectRatio="none"><path d="M0.7 8.8V1.7Q0.7 0.7 1.7 0.7H4.8L6 1.9H11.9Q12.9 1.9 12.9 2.9V8.8Q12.9 9.7 11.9 9.7H1.7Q0.7 9.7 0.7 8.8Z" fill="#ebc662" stroke="#c09838" stroke-width="1"/><rect x="1.7" y="3.2" width="10.2" height="5.6" rx="0.6" fill="url(#fg)" stroke="#fffbe4" stroke-width="0.7"/></svg><span class="t g" style="left:10.3px;top:135.02px">.swt</span>
<svg class="ic" style="left:-4.7px;top:150.75px" width="13.1" height="10.2" viewBox="0 0 13.6 10.4" preserveAspectRatio="none"><path d="M0.7 8.8V1.7Q0.7 0.7 1.7 0.7H4.8L6 1.9H11.9Q12.9 1.9 12.9 2.9V8.8Q12.9 9.7 11.9 9.7H1.7Q0.7 9.7 0.7 8.8Z" fill="#ebc662" stroke="#c09838" stroke-width="1"/><rect x="1.7" y="3.2" width="10.2" height="5.6" rx="0.6" fill="url(#fg)" stroke="#fffbe4" stroke-width="0.7"/></svg><span class="t g" style="left:10.3px;top:149.75px">.Trash</span>
<svg class="ic" style="left:-4.5px;top:165.48499999999999px" width="13.1" height="10.2" viewBox="0 0 13.6 10.4" preserveAspectRatio="none"><path d="M0.7 8.8V1.7Q0.7 0.7 1.7 0.7H4.8L6 1.9H11.9Q12.9 1.9 12.9 2.9V8.8Q12.9 9.7 11.9 9.7H1.7Q0.7 9.7 0.7 8.8Z" fill="#ebc662" stroke="#c09838" stroke-width="1"/><rect x="1.7" y="3.2" width="10.2" height="5.6" rx="0.6" fill="url(#fg)" stroke="#fffbe4" stroke-width="0.7"/></svg><span class="t" style="left:10.3px;top:164.48px">Applications</span>
<svg class="ic" style="left:-4.4px;top:179.82px" width="14" height="11" viewBox="0 0 14 11"><path d="M0.6 9.8V1.8Q0.6 0.8 1.6 0.8H4.4L5.6 2H10.4Q11.2 2 11.2 2.8V4.4" fill="#f3d981" stroke="#c09838" stroke-width="1"/><path d="M0.8 10.2L2.9 4.5H13.4L11.2 10.2Z" fill="url(#fg)" stroke="#c09838" stroke-width="1" stroke-linejoin="round"/></svg><span class="t" style="left:10.3px;top:179.22px">Desktop</span>
<svg class="ic" style="left:9.2px;top:194.955px" width="13.1" height="10.2" viewBox="0 0 13.6 10.4" preserveAspectRatio="none"><path d="M0.7 8.8V1.7Q0.7 0.7 1.7 0.7H4.8L6 1.9H11.9Q12.9 1.9 12.9 2.9V8.8Q12.9 9.7 11.9 9.7H1.7Q0.7 9.7 0.7 8.8Z" fill="#ebc662" stroke="#c09838" stroke-width="1"/><rect x="1.7" y="3.2" width="10.2" height="5.6" rx="0.6" fill="url(#fg)" stroke="#fffbe4" stroke-width="0.7"/></svg><span class="t" style="left:23.2px;top:193.96px">2016 Tshirt.pages</span>
<svg class="ic" style="left:9.2px;top:209.69px" width="13.1" height="10.2" viewBox="0 0 13.6 10.4" preserveAspectRatio="none"><path d="M0.7 8.8V1.7Q0.7 0.7 1.7 0.7H4.8L6 1.9H11.9Q12.9 1.9 12.9 2.9V8.8Q12.9 9.7 11.9 9.7H1.7Q0.7 9.7 0.7 8.8Z" fill="#ebc662" stroke="#c09838" stroke-width="1"/><rect x="1.7" y="3.2" width="10.2" height="5.6" rx="0.6" fill="url(#fg)" stroke="#fffbe4" stroke-width="0.7"/></svg><span class="t" style="left:23.2px;top:208.69px;letter-spacing:-0.032px">Cute Pictures 2016</span>
<svg class="ic" style="left:9.2px;top:224.42499999999998px" width="13.1" height="10.2" viewBox="0 0 13.6 10.4" preserveAspectRatio="none"><path d="M0.7 8.8V1.7Q0.7 0.7 1.7 0.7H4.8L6 1.9H11.9Q12.9 1.9 12.9 2.9V8.8Q12.9 9.7 11.9 9.7H1.7Q0.7 9.7 0.7 8.8Z" fill="#ebc662" stroke="#c09838" stroke-width="1"/><rect x="1.7" y="3.2" width="10.2" height="5.6" rx="0.6" fill="url(#fg)" stroke="#fffbe4" stroke-width="0.7"/></svg><span class="t" style="left:23.2px;top:223.42px;letter-spacing:-0.087px">Two Day Mission Trip! 2015 .pages</span>
<svg class="ic" style="left:9.2px;top:239.16px" width="13.1" height="10.2" viewBox="0 0 13.6 10.4" preserveAspectRatio="none"><path d="M0.7 8.8V1.7Q0.7 0.7 1.7 0.7H4.8L6 1.9H11.9Q12.9 1.9 12.9 2.9V8.8Q12.9 9.7 11.9 9.7H1.7Q0.7 9.7 0.7 8.8Z" fill="#ebc662" stroke="#c09838" stroke-width="1"/><rect x="1.7" y="3.2" width="10.2" height="5.6" rx="0.6" fill="url(#fg)" stroke="#fffbe4" stroke-width="0.7"/></svg><span class="t" style="left:23.2px;top:238.16px;letter-spacing:-0.055px">USB Display Installer.app</span>
<svg class="ic" style="left:9.2px;top:253.895px" width="13.1" height="10.2" viewBox="0 0 13.6 10.4" preserveAspectRatio="none"><path d="M0.7 8.8V1.7Q0.7 0.7 1.7 0.7H4.8L6 1.9H11.9Q12.9 1.9 12.9 2.9V8.8Q12.9 9.7 11.9 9.7H1.7Q0.7 9.7 0.7 8.8Z" fill="#ebc662" stroke="#c09838" stroke-width="1"/><rect x="1.7" y="3.2" width="10.2" height="5.6" rx="0.6" fill="url(#fg)" stroke="#fffbe4" stroke-width="0.7"/></svg><span class="t" style="left:23.2px;top:252.90px">Whirlwind</span>
<svg class="ic" style="left:9.2px;top:268.63px" width="13.1" height="10.2" viewBox="0 0 13.6 10.4" preserveAspectRatio="none"><path d="M0.7 8.8V1.7Q0.7 0.7 1.7 0.7H4.8L6 1.9H11.9Q12.9 1.9 12.9 2.9V8.8Q12.9 9.7 11.9 9.7H1.7Q0.7 9.7 0.7 8.8Z" fill="#ebc662" stroke="#c09838" stroke-width="1"/><rect x="1.7" y="3.2" width="10.2" height="5.6" rx="0.6" fill="url(#fg)" stroke="#fffbe4" stroke-width="0.7"/></svg><span class="t" style="left:23.2px;top:267.63px;letter-spacing:-0.055px">Whirlwind_Team_Contract_2015-3.pages</span>
<svg class="ic" style="left:9.2px;top:283.36499999999995px" width="13.1" height="10.2" viewBox="0 0 13.6 10.4" preserveAspectRatio="none"><path d="M0.7 8.8V1.7Q0.7 0.7 1.7 0.7H4.8L6 1.9H11.9Q12.9 1.9 12.9 2.9V8.8Q12.9 9.7 11.9 9.7H1.7Q0.7 9.7 0.7 8.8Z" fill="#ebc662" stroke="#c09838" stroke-width="1"/><rect x="1.7" y="3.2" width="10.2" height="5.6" rx="0.6" fill="url(#fg)" stroke="#fffbe4" stroke-width="0.7"/></svg><span class="t" style="left:23.2px;top:282.36px;letter-spacing:-0.075px">Whirlwind_Team_Contract_2015.pages</span>
<svg class="ic" style="left:9.2px;top:297.7px" width="14" height="11" viewBox="0 0 14 11"><path d="M0.6 9.8V1.8Q0.6 0.8 1.6 0.8H4.4L5.6 2H10.4Q11.2 2 11.2 2.8V4.4" fill="#f3d981" stroke="#c09838" stroke-width="1"/><path d="M0.8 10.2L2.9 4.5H13.4L11.2 10.2Z" fill="url(#fg)" stroke="#c09838" stroke-width="1" stroke-linejoin="round"/></svg><span class="t" style="left:23.2px;top:297.10px">wwm</span>
<svg class="ic" style="left:7.199999999999999px;top:313.035px" width="7" height="8" viewBox="0 0 7 8"><path d="M0.1 0.1L6.6 3.9L0.1 7.7Z" fill="#8a8a8a"/></svg><svg class="ic" style="left:22.3px;top:312.835px" width="13.1" height="10.2" viewBox="0 0 13.6 10.4" preserveAspectRatio="none"><path d="M0.7 8.8V1.7Q0.7 0.7 1.7 0.7H4.8L6 1.9H11.9Q12.9 1.9 12.9 2.9V8.8Q12.9 9.7 11.9 9.7H1.7Q0.7 9.7 0.7 8.8Z" fill="#ebc662" stroke="#c09838" stroke-width="1"/><rect x="1.7" y="3.2" width="10.2" height="5.6" rx="0.6" fill="url(#fg)" stroke="#fffbe4" stroke-width="0.7"/></svg><span class="t" style="left:36.2px;top:311.83px;letter-spacing:-0.154px">__on_external_drive</span>
<svg class="ic" style="left:7.199999999999999px;top:327.77px" width="7" height="8" viewBox="0 0 7 8"><path d="M0.1 0.1L6.6 3.9L0.1 7.7Z" fill="#8a8a8a"/></svg><svg class="ic" style="left:22.3px;top:327.56999999999994px" width="13.1" height="10.2" viewBox="0 0 13.6 10.4" preserveAspectRatio="none"><path d="M0.7 8.8V1.7Q0.7 0.7 1.7 0.7H4.8L6 1.9H11.9Q12.9 1.9 12.9 2.9V8.8Q12.9 9.7 11.9 9.7H1.7Q0.7 9.7 0.7 8.8Z" fill="#ebc662" stroke="#c09838" stroke-width="1"/><rect x="1.7" y="3.2" width="10.2" height="5.6" rx="0.6" fill="url(#fg)" stroke="#fffbe4" stroke-width="0.7"/></svg><span class="t" style="left:36.2px;top:326.57px">blog</span>
<svg class="ic" style="left:7.199999999999999px;top:342.505px" width="7" height="8" viewBox="0 0 7 8"><path d="M0.1 0.1L6.6 3.9L0.1 7.7Z" fill="#8a8a8a"/></svg><svg class="ic" style="left:22.3px;top:342.30499999999995px" width="13.1" height="10.2" viewBox="0 0 13.6 10.4" preserveAspectRatio="none"><path d="M0.7 8.8V1.7Q0.7 0.7 1.7 0.7H4.8L6 1.9H11.9Q12.9 1.9 12.9 2.9V8.8Q12.9 9.7 11.9 9.7H1.7Q0.7 9.7 0.7 8.8Z" fill="#ebc662" stroke="#c09838" stroke-width="1"/><rect x="1.7" y="3.2" width="10.2" height="5.6" rx="0.6" fill="url(#fg)" stroke="#fffbe4" stroke-width="0.7"/></svg><span class="t" style="left:36.2px;top:341.30px">graphics</span>
<svg class="ic" style="left:7.199999999999999px;top:357.24px" width="7" height="8" viewBox="0 0 7 8"><path d="M0.1 0.1L6.6 3.9L0.1 7.7Z" fill="#8a8a8a"/></svg><svg class="ic" style="left:22.3px;top:357.03999999999996px" width="13.1" height="10.2" viewBox="0 0 13.6 10.4" preserveAspectRatio="none"><path d="M0.7 8.8V1.7Q0.7 0.7 1.7 0.7H4.8L6 1.9H11.9Q12.9 1.9 12.9 2.9V8.8Q12.9 9.7 11.9 9.7H1.7Q0.7 9.7 0.7 8.8Z" fill="#ebc662" stroke="#c09838" stroke-width="1"/><rect x="1.7" y="3.2" width="10.2" height="5.6" rx="0.6" fill="url(#fg)" stroke="#fffbe4" stroke-width="0.7"/></svg><span class="t" style="left:36.2px;top:356.04px">maps</span>
<svg class="ic" style="left:7.199999999999999px;top:371.975px" width="7" height="8" viewBox="0 0 7 8"><path d="M0.1 0.1L6.6 3.9L0.1 7.7Z" fill="#8a8a8a"/></svg><svg class="ic" style="left:22.3px;top:371.775px" width="13.1" height="10.2" viewBox="0 0 13.6 10.4" preserveAspectRatio="none"><path d="M0.7 8.8V1.7Q0.7 0.7 1.7 0.7H4.8L6 1.9H11.9Q12.9 1.9 12.9 2.9V8.8Q12.9 9.7 11.9 9.7H1.7Q0.7 9.7 0.7 8.8Z" fill="#ebc662" stroke="#c09838" stroke-width="1"/><rect x="1.7" y="3.2" width="10.2" height="5.6" rx="0.6" fill="url(#fg)" stroke="#fffbe4" stroke-width="0.7"/></svg><span class="t" style="left:36.2px;top:370.77px">marcuslewislive</span>
<svg class="ic" style="left:6.199999999999999px;top:387.71000000000004px" width="8" height="7" viewBox="0 0 8 7"><path d="M0.2 0.6H7.6L3.9 6.4Z" fill="#8a8a8a"/></svg><svg class="ic" style="left:22.3px;top:386.11px" width="14" height="11" viewBox="0 0 14 11"><path d="M0.6 9.8V1.8Q0.6 0.8 1.6 0.8H4.4L5.6 2H10.4Q11.2 2 11.2 2.8V4.4" fill="#f3d981" stroke="#c09838" stroke-width="1"/><path d="M0.8 10.2L2.9 4.5H13.4L11.2 10.2Z" fill="url(#fg)" stroke="#c09838" stroke-width="1" stroke-linejoin="round"/></svg><span class="t" style="left:36.2px;top:385.51px">newsletters</span>
<svg class="ic" style="left:20.2px;top:401.445px" width="7" height="8" viewBox="0 0 7 8"><path d="M0.1 0.1L6.6 3.9L0.1 7.7Z" fill="#8a8a8a"/></svg><svg class="ic" style="left:35.2px;top:401.24499999999995px" width="13.1" height="10.2" viewBox="0 0 13.6 10.4" preserveAspectRatio="none"><path d="M0.7 8.8V1.7Q0.7 0.7 1.7 0.7H4.8L6 1.9H11.9Q12.9 1.9 12.9 2.9V8.8Q12.9 9.7 11.9 9.7H1.7Q0.7 9.7 0.7 8.8Z" fill="#ebc662" stroke="#c09838" stroke-width="1"/><rect x="1.7" y="3.2" width="10.2" height="5.6" rx="0.6" fill="url(#fg)" stroke="#fffbe4" stroke-width="0.7"/></svg><span class="t" style="left:49.2px;top:400.24px">images</span>
<div class="row" style="top:412.58px;background:#d5d5d5"></div><svg class="ic" style="left:35.2px;top:415.97999999999996px" width="13.1" height="10.2" viewBox="0 0 13.6 10.4" preserveAspectRatio="none"><path d="M0.7 8.8V1.7Q0.7 0.7 1.7 0.7H4.8L6 1.9H11.9Q12.9 1.9 12.9 2.9V8.8Q12.9 9.7 11.9 9.7H1.7Q0.7 9.7 0.7 8.8Z" fill="#ebc662" stroke="#c09838" stroke-width="1"/><rect x="1.7" y="3.2" width="10.2" height="5.6" rx="0.6" fill="url(#fg)" stroke="#fffbe4" stroke-width="0.7"/></svg><span class="t" style="left:49.2px;top:414.98px">OU2015</span>
<svg class="ic" style="left:7.199999999999999px;top:430.915px" width="7" height="8" viewBox="0 0 7 8"><path d="M0.1 0.1L6.6 3.9L0.1 7.7Z" fill="#8a8a8a"/></svg><svg class="ic" style="left:22.3px;top:430.715px" width="13.1" height="10.2" viewBox="0 0 13.6 10.4" preserveAspectRatio="none"><path d="M0.7 8.8V1.7Q0.7 0.7 1.7 0.7H4.8L6 1.9H11.9Q12.9 1.9 12.9 2.9V8.8Q12.9 9.7 11.9 9.7H1.7Q0.7 9.7 0.7 8.8Z" fill="#ebc662" stroke="#c09838" stroke-width="1"/><rect x="1.7" y="3.2" width="10.2" height="5.6" rx="0.6" fill="url(#fg)" stroke="#fffbe4" stroke-width="0.7"/></svg><span class="t" style="left:36.2px;top:429.71px">old_blog</span>
</div>
<div class="pane" style="left:215px;top:158px;width:358px;height:437px">
<div class="hdr" style="left:0;top:0;width:358px;height:13px"></div>
<span class="t" style="left:3.3px;top:1.1px">Name</span>
<svg class="ic" style="left:115px;top:3.6px" width="7" height="5" viewBox="0 0 7 5"><path d="M0.6 4.2L3.5 1L6.4 4.2" fill="none" stroke="#555" stroke-width="1.1"/></svg>
<div class="sep" style="left:125.3px;top:1.5px;height:10px"></div>
<span class="t" style="right:164.2px;top:1.1px">Size</span>
<div class="sep" style="left:197px;top:1.5px;height:10px"></div>
<span class="t" style="left:201.2px;top:1.1px">Type</span>
<div class="sep" style="left:268px;top:1.5px;height:10px"></div>
<span class="t" style="left:274px;top:1.1px">Date</span>
<div class="sep" style="left:344px;top:1.5px;height:10px"></div>
<svg class="ic" style="left:347.2px;top:3.2px" width="9" height="8" viewBox="0 0 9 8"><rect x="0.5" y="0.5" width="7" height="5.4" fill="#fff" stroke="#6e6e6e" stroke-width="0.9"/><path d="M0.5 2.3H7.5M3.6 0.5V5.9" stroke="#6e6e6e" stroke-width="0.8"/><path d="M5 5H8.8L6.9 7.4Z" fill="#4a4a4a" stroke="#fff" stroke-width="0.3"/></svg>
<svg class="ic" style="left:3.4px;top:14.299999999999995px" width="10" height="13" viewBox="0 0 10 12" preserveAspectRatio="none"><path d="M0.5 0.5H6L9.2 3.7V11.5H0.5Z" fill="#fff" stroke="#b4b4b4" stroke-width="0.8"/><path d="M6 0.5V3.7H9.2" fill="#f1f1f1" stroke="#b4b4b4" stroke-width="0.6"/><rect x="2" y="5.8" width="5.4" height="2.6" rx="0.6" fill="#5b93d6"/><rect x="2.4" y="8" width="4.6" height="2" fill="#3b4a5e"/><rect x="3.4" y="8.6" width="2.4" height="0.9" fill="#c9d6e6"/></svg>
<span class="t" style="left:16px;top:15.50px">Ashley's Newsletter Apr…</span>
<span class="t" style="right:166.8px;top:15.50px">854 KB</span>
<span class="t" style="left:199.4px;top:15.50px">pdf</span>
<span class="t" style="left:273px;top:15.50px">May 1 2015</span>
<div class="row" style="top:27.83px;background:#f4f4f4"></div>
<svg class="ic" style="left:3.4px;top:29.034999999999993px" width="10" height="13" viewBox="0 0 10 12" preserveAspectRatio="none"><path d="M0.5 0.5H6L9.2 3.7V11.5H0.5Z" fill="#fff" stroke="#b4b4b4" stroke-width="0.8"/><path d="M6 0.5V3.7H9.2" fill="#f1f1f1" stroke="#b4b4b4" stroke-width="0.6"/><rect x="2" y="5.8" width="5.4" height="2.6" rx="0.6" fill="#5b93d6"/><rect x="2.4" y="8" width="4.6" height="2" fill="#3b4a5e"/><rect x="3.4" y="8.6" width="2.4" height="0.9" fill="#c9d6e6"/></svg>
<span class="t" style="left:16px;top:30.23px">Ashley's Newsletter Feb…</span>
<span class="t" style="right:166.8px;top:30.23px">2,620 KB</span>
<span class="t" style="left:199.4px;top:30.23px">pdf</span>
<span class="t" style="left:273px;top:30.23px">May 1 2015</span>
<svg class="ic" style="left:3.4px;top:43.76999999999999px" width="10" height="13" viewBox="0 0 10 12" preserveAspectRatio="none"><path d="M0.5 0.5H6L9.2 3.7V11.5H0.5Z" fill="#fff" stroke="#b4b4b4" stroke-width="0.8"/><path d="M6 0.5V3.7H9.2" fill="#f1f1f1" stroke="#b4b4b4" stroke-width="0.6"/><rect x="2" y="5.8" width="5.4" height="2.6" rx="0.6" fill="#5b93d6"/><rect x="2.4" y="8" width="4.6" height="2" fill="#3b4a5e"/><rect x="3.4" y="8.6" width="2.4" height="0.9" fill="#c9d6e6"/></svg>
<span class="t" style="left:16px;top:44.97px">Ashley's Newsletter Jan…</span>
<span class="t" style="right:166.8px;top:44.97px">2,508 KB</span>
<span class="t" style="left:199.4px;top:44.97px">pdf</span>
<span class="t" style="left:273px;top:44.97px">May 1 2015</span>
<div class="row" style="top:57.30px;background:#f4f4f4"></div>
<svg class="ic" style="left:3.4px;top:58.50499999999999px" width="10" height="13" viewBox="0 0 10 12" preserveAspectRatio="none"><path d="M0.5 0.5H6L9.2 3.7V11.5H0.5Z" fill="#fff" stroke="#b4b4b4" stroke-width="0.8"/><path d="M6 0.5V3.7H9.2" fill="#f1f1f1" stroke="#b4b4b4" stroke-width="0.6"/><rect x="2" y="5.8" width="5.4" height="2.6" rx="0.6" fill="#5b93d6"/><rect x="2.4" y="8" width="4.6" height="2" fill="#3b4a5e"/><rect x="3.4" y="8.6" width="2.4" height="0.9" fill="#c9d6e6"/></svg>
<span class="t" style="left:16px;top:59.70px">Ashley's Newsletter Mar…</span>
<span class="t" style="right:166.8px;top:59.70px">1,701 KB</span>
<span class="t" style="left:199.4px;top:59.70px">pdf</span>
<span class="t" style="left:273px;top:59.70px">May 1 2015</span>
<svg class="ic" style="left:3.4px;top:73.24px" width="10" height="13" viewBox="0 0 10 12" preserveAspectRatio="none"><path d="M0.5 0.5H6L9.2 3.7V11.5H0.5Z" fill="#fff" stroke="#b4b4b4" stroke-width="0.8"/><path d="M6 0.5V3.7H9.2" fill="#f1f1f1" stroke="#b4b4b4" stroke-width="0.6"/><rect x="2" y="5.8" width="5.4" height="2.6" rx="0.6" fill="#5b93d6"/><rect x="2.4" y="8" width="4.6" height="2" fill="#3b4a5e"/><rect x="3.4" y="8.6" width="2.4" height="0.9" fill="#c9d6e6"/></svg>
<span class="t" style="left:16px;top:74.44px">Ashley's Newsletter Ma…</span>
<span class="t" style="right:166.8px;top:74.44px">2,755 KB</span>
<span class="t" style="left:199.4px;top:74.44px">pdf</span>
<span class="t" style="left:273px;top:74.44px">May 1 2015</span>
<div class="row" style="top:86.77px;background:#f4f4f4"></div>
<svg class="ic" style="left:3.4px;top:87.975px" width="10" height="13" viewBox="0 0 10 12" preserveAspectRatio="none"><path d="M0.5 0.5H6L9.2 3.7V11.5H0.5Z" fill="#fff" stroke="#b4b4b4" stroke-width="0.8"/><path d="M6 0.5V3.7H9.2" fill="#f1f1f1" stroke="#b4b4b4" stroke-width="0.6"/><rect x="2" y="5.8" width="5.4" height="2.6" rx="0.6" fill="#5b93d6"/><rect x="2.4" y="8" width="4.6" height="2" fill="#3b4a5e"/><rect x="3.4" y="8.6" width="2.4" height="0.9" fill="#c9d6e6"/></svg>
<span class="t" style="left:16px;top:89.17px">Cummins Kendall Whirl…</span>
<span class="t" style="right:166.8px;top:89.17px">799 KB</span>
<span class="t" style="left:199.4px;top:89.17px">pdf</span>
<span class="t" style="left:273px;top:89.17px">May 1 2015</span>
<svg class="ic" style="left:3.4px;top:102.71px" width="10" height="13" viewBox="0 0 10 12" preserveAspectRatio="none"><path d="M0.5 0.5H6L9.2 3.7V11.5H0.5Z" fill="#fff" stroke="#b4b4b4" stroke-width="0.8"/><path d="M6 0.5V3.7H9.2" fill="#f1f1f1" stroke="#b4b4b4" stroke-width="0.6"/><rect x="2" y="5.8" width="5.4" height="2.6" rx="0.6" fill="#5b93d6"/><rect x="2.4" y="8" width="4.6" height="2" fill="#3b4a5e"/><rect x="3.4" y="8.6" width="2.4" height="0.9" fill="#c9d6e6"/></svg>
<span class="t" style="left:16px;top:103.91px">Outreach Update April 2…</span>
<span class="t" style="right:166.8px;top:103.91px">698 KB</span>
<span class="t" style="left:199.4px;top:103.91px">pdf</span>
<span class="t" style="left:273px;top:103.91px">May 1 2015</span>
<div class="row" style="top:116.24px;background:#f4f4f4"></div>
<svg class="ic" style="left:3.4px;top:117.445px" width="10" height="13" viewBox="0 0 10 12" preserveAspectRatio="none"><path d="M0.5 0.5H6L9.2 3.7V11.5H0.5Z" fill="#fff" stroke="#b4b4b4" stroke-width="0.8"/><path d="M6 0.5V3.7H9.2" fill="#f1f1f1" stroke="#b4b4b4" stroke-width="0.6"/><rect x="2" y="5.8" width="5.4" height="2.6" rx="0.6" fill="#5b93d6"/><rect x="2.4" y="8" width="4.6" height="2" fill="#3b4a5e"/><rect x="3.4" y="8.6" width="2.4" height="0.9" fill="#c9d6e6"/></svg>
<span class="t" style="left:16px;top:118.64px">Outreach Update Febru…</span>
<span class="t" style="right:166.8px;top:118.64px">800 KB</span>
<span class="t" style="left:199.4px;top:118.64px">pdf</span>
<span class="t" style="left:273px;top:118.64px">May 1 2015</span>
<div class="row" style="top:130.98px;background:#1a6dd7"></div>
<svg class="ic" style="left:3.4px;top:132.18px" width="10" height="13" viewBox="0 0 10 12" preserveAspectRatio="none"><path d="M0.5 0.5H6L9.2 3.7V11.5H0.5Z" fill="#fff" stroke="#b4b4b4" stroke-width="0.8"/><path d="M6 0.5V3.7H9.2" fill="#f1f1f1" stroke="#b4b4b4" stroke-width="0.6"/><rect x="2" y="5.8" width="5.4" height="2.6" rx="0.6" fill="#5b93d6"/><rect x="2.4" y="8" width="4.6" height="2" fill="#3b4a5e"/><rect x="3.4" y="8.6" width="2.4" height="0.9" fill="#c9d6e6"/></svg>
<span class="t" style="left:16px;top:133.38px;color:#fff">Outreach Update Janua…</span>
<span class="t" style="right:166.8px;top:133.38px;color:#fff">846 KB</span>
<span class="t" style="left:199.4px;top:133.38px;color:#fff">pdf</span>
<span class="t" style="left:273px;top:133.38px;color:#fff">May 1 2015</span>
<div class="row" style="top:145.72px;background:#f4f4f4"></div>
<svg class="ic" style="left:3.4px;top:146.91500000000002px" width="10" height="13" viewBox="0 0 10 12" preserveAspectRatio="none"><path d="M0.5 0.5H6L9.2 3.7V11.5H0.5Z" fill="#fff" stroke="#b4b4b4" stroke-width="0.8"/><path d="M6 0.5V3.7H9.2" fill="#f1f1f1" stroke="#b4b4b4" stroke-width="0.6"/><rect x="2" y="5.8" width="5.4" height="2.6" rx="0.6" fill="#5b93d6"/><rect x="2.4" y="8" width="4.6" height="2" fill="#3b4a5e"/><rect x="3.4" y="8.6" width="2.4" height="0.9" fill="#c9d6e6"/></svg>
<span class="t" style="left:16px;top:148.12px">Outreach Update March…</span>
<span class="t" style="right:166.8px;top:148.12px">933 KB</span>
<span class="t" style="left:199.4px;top:148.12px">pdf</span>
<span class="t" style="left:273px;top:148.12px">May 1 2015</span>
<svg class="ic" style="left:3.4px;top:161.65px" width="10" height="13" viewBox="0 0 10 12" preserveAspectRatio="none"><path d="M0.5 0.5H6L9.2 3.7V11.5H0.5Z" fill="#fff" stroke="#b4b4b4" stroke-width="0.8"/><path d="M6 0.5V3.7H9.2" fill="#f1f1f1" stroke="#b4b4b4" stroke-width="0.6"/><rect x="2" y="5.8" width="5.4" height="2.6" rx="0.6" fill="#5b93d6"/><rect x="2.4" y="8" width="4.6" height="2" fill="#3b4a5e"/><rect x="3.4" y="8.6" width="2.4" height="0.9" fill="#c9d6e6"/></svg>
<span class="t" style="left:16px;top:162.85px">Outreach Update May 2…</span>
<span class="t" style="right:166.8px;top:162.85px">768 KB</span>
<span class="t" style="left:199.4px;top:162.85px">pdf</span>
<span class="t" style="left:273px;top:162.85px">May 1 2015</span>
</div>
<svg class="ic" style="left:208.6px;top:331.5px" width="6" height="90" viewBox="0 0 6 90"><path d="M4.6 0.5L1.4 3L4.6 5.5Z" fill="#444"/><path d="M4.6 84.5L1.4 87L4.6 89.5Z" fill="#444"/><rect x="2.9" y="9.60" width="1" height="1" fill="#6f7688"/><rect x="2.9" y="12.02" width="1" height="1" fill="#6f7688"/><rect x="2.9" y="14.44" width="1" height="1" fill="#6f7688"/><rect x="2.9" y="16.86" width="1" height="1" fill="#6f7688"/><rect x="2.9" y="19.28" width="1" height="1" fill="#6f7688"/><rect x="2.9" y="21.70" width="1" height="1" fill="#6f7688"/><rect x="2.9" y="24.12" width="1" height="1" fill="#6f7688"/><rect x="2.9" y="26.54" width="1" height="1" fill="#6f7688"/><rect x="2.9" y="28.96" width="1" height="1" fill="#6f7688"/><rect x="2.9" y="31.38" width="1" height="1" fill="#6f7688"/><rect x="2.9" y="33.80" width="1" height="1" fill="#6f7688"/><rect x="2.9" y="36.22" width="1" height="1" fill="#6f7688"/><rect x="2.9" y="38.64" width="1" height="1" fill="#6f7688"/><rect x="2.9" y="41.06" width="1" height="1" fill="#6f7688"/><rect x="2.9" y="43.48" width="1" height="1" fill="#6f7688"/><rect x="2.9" y="45.90" width="1" height="1" fill="#6f7688"/><rect x="2.9" y="48.32" width="1" height="1" fill="#6f7688"/><rect x="2.9" y="50.74" width="1" height="1" fill="#6f7688"/><rect x="2.9" y="53.16" width="1" height="1" fill="#6f7688"/><rect x="2.9" y="55.58" width="1" height="1" fill="#6f7688"/><rect x="2.9" y="58.00" width="1" height="1" fill="#6f7688"/><rect x="2.9" y="60.42" width="1" height="1" fill="#6f7688"/><rect x="2.9" y="62.84" width="1" height="1" fill="#6f7688"/><rect x="2.9" y="65.26" width="1" height="1" fill="#6f7688"/><rect x="2.9" y="67.68" width="1" height="1" fill="#6f7688"/><rect x="2.9" y="70.10" width="1" height="1" fill="#6f7688"/><rect x="2.9" y="72.52" width="1" height="1" fill="#6f7688"/><rect x="2.9" y="74.94" width="1" height="1" fill="#6f7688"/><rect x="2.9" y="77.36" width="1" height="1" fill="#6f7688"/><rect x="2.9" y="79.78" width="1" height="1" fill="#6f7688"/><rect x="2.9" y="82.20" width="1" height="1" fill="#6f7688"/></svg>
<svg class="ic" style="left:811.4px;top:331.5px" width="6" height="90" viewBox="0 0 6 90"><path d="M4.6 0.5L1.4 3L4.6 5.5Z" fill="#444"/><path d="M4.6 84.5L1.4 87L4.6 89.5Z" fill="#444"/><rect x="2.9" y="9.60" width="1" height="1" fill="#6f7688"/><rect x="2.9" y="12.02" width="1" height="1" fill="#6f7688"/><rect x="2.9" y="14.44" width="1" height="1" fill="#6f7688"/><rect x="2.9" y="16.86" width="1" height="1" fill="#6f7688"/><rect x="2.9" y="19.28" width="1" height="1" fill="#6f7688"/><rect x="2.9" y="21.70" width="1" height="1" fill="#6f7688"/><rect x="2.9" y="24.12" width="1" height="1" fill="#6f7688"/><rect x="2.9" y="26.54" width="1" height="1" fill="#6f7688"/><rect x="2.9" y="28.96" width="1" height="1" fill="#6f7688"/><rect x="2.9" y="31.38" width="1" height="1" fill="#6f7688"/><rect x="2.9" y="33.80" width="1" height="1" fill="#6f7688"/><rect x="2.9" y="36.22" width="1" height="1" fill="#6f7688"/><rect x="2.9" y="38.64" width="1" height="1" fill="#6f7688"/><rect x="2.9" y="41.06" width="1" height="1" fill="#6f7688"/><rect x="2.9" y="43.48" width="1" height="1" fill="#6f7688"/><rect x="2.9" y="45.90" width="1" height="1" fill="#6f7688"/><rect x="2.9" y="48.32" width="1" height="1" fill="#6f7688"/><rect x="2.9" y="50.74" width="1" height="1" fill="#6f7688"/><rect x="2.9" y="53.16" width="1" height="1" fill="#6f7688"/><rect x="2.9" y="55.58" width="1" height="1" fill="#6f7688"/><rect x="2.9" y="58.00" width="1" height="1" fill="#6f7688"/><rect x="2.9" y="60.42" width="1" height="1" fill="#6f7688"/><rect x="2.9" y="62.84" width="1" height="1" fill="#6f7688"/><rect x="2.9" y="65.26" width="1" height="1" fill="#6f7688"/><rect x="2.9" y="67.68" width="1" height="1" fill="#6f7688"/><rect x="2.9" y="70.10" width="1" height="1" fill="#6f7688"/><rect x="2.9" y="72.52" width="1" height="1" fill="#6f7688"/><rect x="2.9" y="74.94" width="1" height="1" fill="#6f7688"/><rect x="2.9" y="77.36" width="1" height="1" fill="#6f7688"/><rect x="2.9" y="79.78" width="1" height="1" fill="#6f7688"/><rect x="2.9" y="82.20" width="1" height="1" fill="#6f7688"/></svg>
<div style="left:583px;top:346.3px;width:28px;height:14.7px;background:#fefefe;border:1px solid #cdcdcd;border-bottom-color:#b9b9b9;border-radius:3.5px;box-sizing:border-box;box-shadow:0 .5px .6px rgba(0,0,0,.18)"></div>
<svg class="ic" style="left:590px;top:347.2px" width="12.4" height="12.4" viewBox="0 0 12.4 12.4"><path d="M0.6 6.2L6.6 0.6V3.4H11.8V9H6.6V11.8Z" fill="url(#ag)" stroke="#3f8a2b" stroke-width="0.8" stroke-linejoin="round"/></svg>
<div style="left:583px;top:369.1px;width:28px;height:14.7px;background:#fefefe;border:1px solid #cdcdcd;border-bottom-color:#b9b9b9;border-radius:3.5px;box-sizing:border-box;box-shadow:0 .5px .6px rgba(0,0,0,.18)"></div>
<svg class="ic" style="left:590px;top:370.0px" width="12.4" height="12.4" viewBox="0 0 12.4 12.4"><path d="M11.8 6.2L5.8 0.6V3.4H0.6V9H5.8V11.8Z" fill="url(#ag)" stroke="#3f8a2b" stroke-width="0.8" stroke-linejoin="round"/></svg>
<div style="left:575.8px;top:363.4px;width:2.6px;height:2.6px;border-radius:50%;background:#8f8f8f;box-shadow:0 1px 0 #fff"></div>
<div style="left:617.4px;top:363.4px;width:2.6px;height:2.6px;border-radius:50%;background:#8f8f8f;box-shadow:0 1px 0 #fff"></div>
<div class="pane" style="left:622px;top:158.0px;width:188px;height:437px">
<div class="row" style="top:0.00px;background:#d5d5d5"></div><svg class="ic" style="left:3.2999999999999545px;top:4.6px" width="8" height="7" viewBox="0 0 8 7"><path d="M0.2 0.6H7.6L3.9 6.4Z" fill="#8a8a8a"/></svg><svg class="ic" style="left:18.799999999999955px;top:3.0px" width="14" height="11" viewBox="0 0 14 11"><path d="M0.6 9.8V1.8Q0.6 0.8 1.6 0.8H4.4L5.6 2H10.4Q11.2 2 11.2 2.8V4.4" fill="#f3d981" stroke="#c09838" stroke-width="1"/><path d="M0.8 10.2L2.9 4.5H13.4L11.2 10.2Z" fill="url(#fg)" stroke="#c09838" stroke-width="1" stroke-linejoin="round"/></svg><span class="t" style="left:32.5px;top:2.40px">/</span>
<svg class="ic" style="left:17.200000000000045px;top:18.335px" width="7" height="8" viewBox="0 0 7 8"><path d="M0.1 0.1L6.6 3.9L0.1 7.7Z" fill="#8a8a8a"/></svg><svg class="ic" style="left:31.799999999999955px;top:18.134999999999998px" width="13.1" height="10.2" viewBox="0 0 13.6 10.4" preserveAspectRatio="none"><path d="M0.7 8.8V1.7Q0.7 0.7 1.7 0.7H4.8L6 1.9H11.9Q12.9 1.9 12.9 2.9V8.8Q12.9 9.7 11.9 9.7H1.7Q0.7 9.7 0.7 8.8Z" fill="#ebc662" stroke="#c09838" stroke-width="1"/><rect x="1.7" y="3.2" width="10.2" height="5.6" rx="0.6" fill="url(#fg)" stroke="#fffbe4" stroke-width="0.7"/></svg><span class="t g" style="left:45.89999999999998px;top:17.13px">.smileys</span>
<svg class="ic" style="left:17.200000000000045px;top:33.07px" width="7" height="8" viewBox="0 0 7 8"><path d="M0.1 0.1L6.6 3.9L0.1 7.7Z" fill="#8a8a8a"/></svg><svg class="ic" style="left:31.799999999999955px;top:32.87px" width="13.1" height="10.2" viewBox="0 0 13.6 10.4" preserveAspectRatio="none"><path d="M0.7 8.8V1.7Q0.7 0.7 1.7 0.7H4.8L6 1.9H11.9Q12.9 1.9 12.9 2.9V8.8Q12.9 9.7 11.9 9.7H1.7Q0.7 9.7 0.7 8.8Z" fill="#ebc662" stroke="#c09838" stroke-width="1"/><rect x="1.7" y="3.2" width="10.2" height="5.6" rx="0.6" fill="url(#fg)" stroke="#fffbe4" stroke-width="0.7"/></svg><span class="t" style="left:45.89999999999998px;top:31.87px">ashiweb</span>
<svg class="ic" style="left:17.200000000000045px;top:47.805px" width="7" height="8" viewBox="0 0 7 8"><path d="M0.1 0.1L6.6 3.9L0.1 7.7Z" fill="#8a8a8a"/></svg><svg class="ic" style="left:31.799999999999955px;top:47.605px" width="13.1" height="10.2" viewBox="0 0 13.6 10.4" preserveAspectRatio="none"><path d="M0.7 8.8V1.7Q0.7 0.7 1.7 0.7H4.8L6 1.9H11.9Q12.9 1.9 12.9 2.9V8.8Q12.9 9.7 11.9 9.7H1.7Q0.7 9.7 0.7 8.8Z" fill="#ebc662" stroke="#c09838" stroke-width="1"/><rect x="1.7" y="3.2" width="10.2" height="5.6" rx="0.6" fill="url(#fg)" stroke="#fffbe4" stroke-width="0.7"/></svg><span class="t" style="left:45.89999999999998px;top:46.60px">ashleycummins</span>
<svg class="ic" style="left:17.200000000000045px;top:62.54px" width="7" height="8" viewBox="0 0 7 8"><path d="M0.1 0.1L6.6 3.9L0.1 7.7Z" fill="#8a8a8a"/></svg><svg class="ic" style="left:31.799999999999955px;top:62.339999999999996px" width="13.1" height="10.2" viewBox="0 0 13.6 10.4" preserveAspectRatio="none"><path d="M0.7 8.8V1.7Q0.7 0.7 1.7 0.7H4.8L6 1.9H11.9Q12.9 1.9 12.9 2.9V8.8Q12.9 9.7 11.9 9.7H1.7Q0.7 9.7 0.7 8.8Z" fill="#ebc662" stroke="#c09838" stroke-width="1"/><rect x="1.7" y="3.2" width="10.2" height="5.6" rx="0.6" fill="url(#fg)" stroke="#fffbe4" stroke-width="0.7"/></svg><span class="t" style="left:45.89999999999998px;top:61.34px">atlantacounselingcenter</span>
<svg class="ic" style="left:17.200000000000045px;top:77.27499999999999px" width="7" height="8" viewBox="0 0 7 8"><path d="M0.1 0.1L6.6 3.9L0.1 7.7Z" fill="#8a8a8a"/></svg><svg class="ic" style="left:31.799999999999955px;top:77.075px" width="13.1" height="10.2" viewBox="0 0 13.6 10.4" preserveAspectRatio="none"><path d="M0.7 8.8V1.7Q0.7 0.7 1.7 0.7H4.8L6 1.9H11.9Q12.9 1.9 12.9 2.9V8.8Q12.9 9.7 11.9 9.7H1.7Q0.7 9.7 0.7 8.8Z" fill="#ebc662" stroke="#c09838" stroke-width="1"/><rect x="1.7" y="3.2" width="10.2" height="5.6" rx="0.6" fill="url(#fg)" stroke="#fffbe4" stroke-width="0.7"/></svg><span class="t" style="left:45.89999999999998px;top:76.08px">blog</span>
<svg class="ic" style="left:17.200000000000045px;top:92.00999999999999px" width="7" height="8" viewBox="0 0 7 8"><path d="M0.1 0.1L6.6 3.9L0.1 7.7Z" fill="#8a8a8a"/></svg><svg class="ic" style="left:31.799999999999955px;top:91.81px" width="13.1" height="10.2" viewBox="0 0 13.6 10.4" preserveAspectRatio="none"><path d="M0.7 8.8V1.7Q0.7 0.7 1.7 0.7H4.8L6 1.9H11.9Q12.9 1.9 12.9 2.9V8.8Q12.9 9.7 11.9 9.7H1.7Q0.7 9.7 0.7 8.8Z" fill="#ebc662" stroke="#c09838" stroke-width="1"/><rect x="1.7" y="3.2" width="10.2" height="5.6" rx="0.6" fill="url(#fg)" stroke="#fffbe4" stroke-width="0.7"/></svg><span class="t" style="left:45.89999999999998px;top:90.81px">blog-ash</span>
<svg class="ic" style="left:17.200000000000045px;top:106.74499999999999px" width="7" height="8" viewBox="0 0 7 8"><path d="M0.1 0.1L6.6 3.9L0.1 7.7Z" fill="#8a8a8a"/></svg><svg class="ic" style="left:31.799999999999955px;top:106.545px" width="13.1" height="10.2" viewBox="0 0 13.6 10.4" preserveAspectRatio="none"><path d="M0.7 8.8V1.7Q0.7 0.7 1.7 0.7H4.8L6 1.9H11.9Q12.9 1.9 12.9 2.9V8.8Q12.9 9.7 11.9 9.7H1.7Q0.7 9.7 0.7 8.8Z" fill="#ebc662" stroke="#c09838" stroke-width="1"/><rect x="1.7" y="3.2" width="10.2" height="5.6" rx="0.6" fill="url(#fg)" stroke="#fffbe4" stroke-width="0.7"/></svg><span class="t" style="left:45.89999999999998px;top:105.55px">blog23</span>
<svg class="ic" style="left:17.200000000000045px;top:121.47999999999999px" width="7" height="8" viewBox="0 0 7 8"><path d="M0.1 0.1L6.6 3.9L0.1 7.7Z" fill="#8a8a8a"/></svg><svg class="ic" style="left:31.799999999999955px;top:121.28px" width="13.1" height="10.2" viewBox="0 0 13.6 10.4" preserveAspectRatio="none"><path d="M0.7 8.8V1.7Q0.7 0.7 1.7 0.7H4.8L6 1.9H11.9Q12.9 1.9 12.9 2.9V8.8Q12.9 9.7 11.9 9.7H1.7Q0.7 9.7 0.7 8.8Z" fill="#ebc662" stroke="#c09838" stroke-width="1"/><rect x="1.7" y="3.2" width="10.2" height="5.6" rx="0.6" fill="url(#fg)" stroke="#fffbe4" stroke-width="0.7"/></svg><span class="t" style="left:45.89999999999998px;top:120.28px">blog5</span>
<svg class="ic" style="left:17.200000000000045px;top:136.215px" width="7" height="8" viewBox="0 0 7 8"><path d="M0.1 0.1L6.6 3.9L0.1 7.7Z" fill="#8a8a8a"/></svg><svg class="ic" style="left:31.799999999999955px;top:136.01500000000001px" width="13.1" height="10.2" viewBox="0 0 13.6 10.4" preserveAspectRatio="none"><path d="M0.7 8.8V1.7Q0.7 0.7 1.7 0.7H4.8L6 1.9H11.9Q12.9 1.9 12.9 2.9V8.8Q12.9 9.7 11.9 9.7H1.7Q0.7 9.7 0.7 8.8Z" fill="#ebc662" stroke="#c09838" stroke-width="1"/><rect x="1.7" y="3.2" width="10.2" height="5.6" rx="0.6" fill="url(#fg)" stroke="#fffbe4" stroke-width="0.7"/></svg><span class="t" style="left:45.89999999999998px;top:135.02px">blog6</span>
<svg class="ic" style="left:17.200000000000045px;top:150.95px" width="7" height="8" viewBox="0 0 7 8"><path d="M0.1 0.1L6.6 3.9L0.1 7.7Z" fill="#8a8a8a"/></svg><svg class="ic" style="left:31.799999999999955px;top:150.75px" width="13.1" height="10.2" viewBox="0 0 13.6 10.4" preserveAspectRatio="none"><path d="M0.7 8.8V1.7Q0.7 0.7 1.7 0.7H4.8L6 1.9H11.9Q12.9 1.9 12.9 2.9V8.8Q12.9 9.7 11.9 9.7H1.7Q0.7 9.7 0.7 8.8Z" fill="#ebc662" stroke="#c09838" stroke-width="1"/><rect x="1.7" y="3.2" width="10.2" height="5.6" rx="0.6" fill="url(#fg)" stroke="#fffbe4" stroke-width="0.7"/></svg><span class="t" style="left:45.89999999999998px;top:149.75px">blog_old</span>
<svg class="ic" style="left:17.200000000000045px;top:165.68499999999997px" width="7" height="8" viewBox="0 0 7 8"><path d="M0.1 0.1L6.6 3.9L0.1 7.7Z" fill="#8a8a8a"/></svg><svg class="ic" style="left:31.799999999999955px;top:165.48499999999999px" width="13.1" height="10.2" viewBox="0 0 13.6 10.4" preserveAspectRatio="none"><path d="M0.7 8.8V1.7Q0.7 0.7 1.7 0.7H4.8L6 1.9H11.9Q12.9 1.9 12.9 2.9V8.8Q12.9 9.7 11.9 9.7H1.7Q0.7 9.7 0.7 8.8Z" fill="#ebc662" stroke="#c09838" stroke-width="1"/><rect x="1.7" y="3.2" width="10.2" height="5.6" rx="0.6" fill="url(#fg)" stroke="#fffbe4" stroke-width="0.7"/></svg><span class="t" style="left:45.89999999999998px;top:164.48px">bp-new</span>
<svg class="ic" style="left:17.200000000000045px;top:180.42px" width="7" height="8" viewBox="0 0 7 8"><path d="M0.1 0.1L6.6 3.9L0.1 7.7Z" fill="#8a8a8a"/></svg><svg class="ic" style="left:31.799999999999955px;top:180.22px" width="13.1" height="10.2" viewBox="0 0 13.6 10.4" preserveAspectRatio="none"><path d="M0.7 8.8V1.7Q0.7 0.7 1.7 0.7H4.8L6 1.9H11.9Q12.9 1.9 12.9 2.9V8.8Q12.9 9.7 11.9 9.7H1.7Q0.7 9.7 0.7 8.8Z" fill="#ebc662" stroke="#c09838" stroke-width="1"/><rect x="1.7" y="3.2" width="10.2" height="5.6" rx="0.6" fill="url(#fg)" stroke="#fffbe4" stroke-width="0.7"/></svg><span class="t" style="left:45.89999999999998px;top:179.22px">cgi-bin</span>
<svg class="ic" style="left:17.200000000000045px;top:195.155px" width="7" height="8" viewBox="0 0 7 8"><path d="M0.1 0.1L6.6 3.9L0.1 7.7Z" fill="#8a8a8a"/></svg><svg class="ic" style="left:31.799999999999955px;top:194.955px" width="13.1" height="10.2" viewBox="0 0 13.6 10.4" preserveAspectRatio="none"><path d="M0.7 8.8V1.7Q0.7 0.7 1.7 0.7H4.8L6 1.9H11.9Q12.9 1.9 12.9 2.9V8.8Q12.9 9.7 11.9 9.7H1.7Q0.7 9.7 0.7 8.8Z" fill="#ebc662" stroke="#c09838" stroke-width="1"/><rect x="1.7" y="3.2" width="10.2" height="5.6" rx="0.6" fill="url(#fg)" stroke="#fffbe4" stroke-width="0.7"/></svg><span class="t" style="left:45.89999999999998px;top:193.96px">cssnphp</span>
<svg class="ic" style="left:17.200000000000045px;top:209.89px" width="7" height="8" viewBox="0 0 7 8"><path d="M0.1 0.1L6.6 3.9L0.1 7.7Z" fill="#8a8a8a"/></svg><svg class="ic" style="left:31.799999999999955px;top:209.69px" width="13.1" height="10.2" viewBox="0 0 13.6 10.4" preserveAspectRatio="none"><path d="M0.7 8.8V1.7Q0.7 0.7 1.7 0.7H4.8L6 1.9H11.9Q12.9 1.9 12.9 2.9V8.8Q12.9 9.7 11.9 9.7H1.7Q0.7 9.7 0.7 8.8Z" fill="#ebc662" stroke="#c09838" stroke-width="1"/><rect x="1.7" y="3.2" width="10.2" height="5.6" rx="0.6" fill="url(#fg)" stroke="#fffbe4" stroke-width="0.7"/></svg><span class="t" style="left:45.89999999999998px;top:208.69px">doverspikelaw</span>
<svg class="ic" style="left:17.200000000000045px;top:224.62499999999997px" width="7" height="8" viewBox="0 0 7 8"><path d="M0.1 0.1L6.6 3.9L0.1 7.7Z" fill="#8a8a8a"/></svg><svg class="ic" style="left:31.799999999999955px;top:224.42499999999998px" width="13.1" height="10.2" viewBox="0 0 13.6 10.4" preserveAspectRatio="none"><path d="M0.7 8.8V1.7Q0.7 0.7 1.7 0.7H4.8L6 1.9H11.9Q12.9 1.9 12.9 2.9V8.8Q12.9 9.7 11.9 9.7H1.7Q0.7 9.7 0.7 8.8Z" fill="#ebc662" stroke="#c09838" stroke-width="1"/><rect x="1.7" y="3.2" width="10.2" height="5.6" rx="0.6" fill="url(#fg)" stroke="#fffbe4" stroke-width="0.7"/></svg><span class="t" style="left:45.89999999999998px;top:223.42px">drwilliamdoverspike</span>
<svg class="ic" style="left:17.200000000000045px;top:239.35999999999999px" width="7" height="8" viewBox="0 0 7 8"><path d="M0.1 0.1L6.6 3.9L0.1 7.7Z" fill="#8a8a8a"/></svg><svg class="ic" style="left:31.799999999999955px;top:239.16px" width="13.1" height="10.2" viewBox="0 0 13.6 10.4" preserveAspectRatio="none"><path d="M0.7 8.8V1.7Q0.7 0.7 1.7 0.7H4.8L6 1.9H11.9Q12.9 1.9 12.9 2.9V8.8Q12.9 9.7 11.9 9.7H1.7Q0.7 9.7 0.7 8.8Z" fill="#ebc662" stroke="#c09838" stroke-width="1"/><rect x="1.7" y="3.2" width="10.2" height="5.6" rx="0.6" fill="url(#fg)" stroke="#fffbe4" stroke-width="0.7"/></svg><span class="t" style="left:45.89999999999998px;top:238.16px">forum_</span>
<svg class="ic" style="left:17.200000000000045px;top:254.095px" width="7" height="8" viewBox="0 0 7 8"><path d="M0.1 0.1L6.6 3.9L0.1 7.7Z" fill="#8a8a8a"/></svg><svg class="ic" style="left:31.799999999999955px;top:253.895px" width="13.1" height="10.2" viewBox="0 0 13.6 10.4" preserveAspectRatio="none"><path d="M0.7 8.8V1.7Q0.7 0.7 1.7 0.7H4.8L6 1.9H11.9Q12.9 1.9 12.9 2.9V8.8Q12.9 9.7 11.9 9.7H1.7Q0.7 9.7 0.7 8.8Z" fill="#ebc662" stroke="#c09838" stroke-width="1"/><rect x="1.7" y="3.2" width="10.2" height="5.6" rx="0.6" fill="url(#fg)" stroke="#fffbe4" stroke-width="0.7"/></svg><span class="t" style="left:45.89999999999998px;top:252.90px">graphics</span>
<svg class="ic" style="left:17.200000000000045px;top:268.83000000000004px" width="7" height="8" viewBox="0 0 7 8"><path d="M0.1 0.1L6.6 3.9L0.1 7.7Z" fill="#8a8a8a"/></svg><svg class="ic" style="left:31.799999999999955px;top:268.63px" width="13.1" height="10.2" viewBox="0 0 13.6 10.4" preserveAspectRatio="none"><path d="M0.7 8.8V1.7Q0.7 0.7 1.7 0.7H4.8L6 1.9H11.9Q12.9 1.9 12.9 2.9V8.8Q12.9 9.7 11.9 9.7H1.7Q0.7 9.7 0.7 8.8Z" fill="#ebc662" stroke="#c09838" stroke-width="1"/><rect x="1.7" y="3.2" width="10.2" height="5.6" rx="0.6" fill="url(#fg)" stroke="#fffbe4" stroke-width="0.7"/></svg><span class="t" style="left:45.89999999999998px;top:267.63px">maps</span>
<svg class="ic" style="left:17.200000000000045px;top:283.565px" width="7" height="8" viewBox="0 0 7 8"><path d="M0.1 0.1L6.6 3.9L0.1 7.7Z" fill="#8a8a8a"/></svg><svg class="ic" style="left:31.799999999999955px;top:283.36499999999995px" width="13.1" height="10.2" viewBox="0 0 13.6 10.4" preserveAspectRatio="none"><path d="M0.7 8.8V1.7Q0.7 0.7 1.7 0.7H4.8L6 1.9H11.9Q12.9 1.9 12.9 2.9V8.8Q12.9 9.7 11.9 9.7H1.7Q0.7 9.7 0.7 8.8Z" fill="#ebc662" stroke="#c09838" stroke-width="1"/><rect x="1.7" y="3.2" width="10.2" height="5.6" rx="0.6" fill="url(#fg)" stroke="#fffbe4" stroke-width="0.7"/></svg><span class="t" style="left:45.89999999999998px;top:282.36px">marcuslewislive</span>
<svg class="ic" style="left:17.200000000000045px;top:298.3px" width="7" height="8" viewBox="0 0 7 8"><path d="M0.1 0.1L6.6 3.9L0.1 7.7Z" fill="#8a8a8a"/></svg><svg class="ic" style="left:31.799999999999955px;top:298.09999999999997px" width="13.1" height="10.2" viewBox="0 0 13.6 10.4" preserveAspectRatio="none"><path d="M0.7 8.8V1.7Q0.7 0.7 1.7 0.7H4.8L6 1.9H11.9Q12.9 1.9 12.9 2.9V8.8Q12.9 9.7 11.9 9.7H1.7Q0.7 9.7 0.7 8.8Z" fill="#ebc662" stroke="#c09838" stroke-width="1"/><rect x="1.7" y="3.2" width="10.2" height="5.6" rx="0.6" fill="url(#fg)" stroke="#fffbe4" stroke-width="0.7"/></svg><span class="t" style="left:45.89999999999998px;top:297.10px">newsletters</span>
<svg class="ic" style="left:17.200000000000045px;top:313.035px" width="7" height="8" viewBox="0 0 7 8"><path d="M0.1 0.1L6.6 3.9L0.1 7.7Z" fill="#8a8a8a"/></svg><svg class="ic" style="left:31.799999999999955px;top:312.835px" width="13.1" height="10.2" viewBox="0 0 13.6 10.4" preserveAspectRatio="none"><path d="M0.7 8.8V1.7Q0.7 0.7 1.7 0.7H4.8L6 1.9H11.9Q12.9 1.9 12.9 2.9V8.8Q12.9 9.7 11.9 9.7H1.7Q0.7 9.7 0.7 8.8Z" fill="#ebc662" stroke="#c09838" stroke-width="1"/><rect x="1.7" y="3.2" width="10.2" height="5.6" rx="0.6" fill="url(#fg)" stroke="#fffbe4" stroke-width="0.7"/></svg><span class="t" style="left:45.89999999999998px;top:311.83px">northpapers</span>
<svg class="ic" style="left:17.200000000000045px;top:327.77px" width="7" height="8" viewBox="0 0 7 8"><path d="M0.1 0.1L6.6 3.9L0.1 7.7Z" fill="#8a8a8a"/></svg><svg class="ic" style="left:31.799999999999955px;top:327.56999999999994px" width="13.1" height="10.2" viewBox="0 0 13.6 10.4" preserveAspectRatio="none"><path d="M0.7 8.8V1.7Q0.7 0.7 1.7 0.7H4.8L6 1.9H11.9Q12.9 1.9 12.9 2.9V8.8Q12.9 9.7 11.9 9.7H1.7Q0.7 9.7 0.7 8.8Z" fill="#ebc662" stroke="#c09838" stroke-width="1"/><rect x="1.7" y="3.2" width="10.2" height="5.6" rx="0.6" fill="url(#fg)" stroke="#fffbe4" stroke-width="0.7"/></svg><span class="t" style="left:45.89999999999998px;top:326.57px">old</span>
<svg class="ic" style="left:17.200000000000045px;top:342.505px" width="7" height="8" viewBox="0 0 7 8"><path d="M0.1 0.1L6.6 3.9L0.1 7.7Z" fill="#8a8a8a"/></svg><svg class="ic" style="left:31.799999999999955px;top:342.30499999999995px" width="13.1" height="10.2" viewBox="0 0 13.6 10.4" preserveAspectRatio="none"><path d="M0.7 8.8V1.7Q0.7 0.7 1.7 0.7H4.8L6 1.9H11.9Q12.9 1.9 12.9 2.9V8.8Q12.9 9.7 11.9 9.7H1.7Q0.7 9.7 0.7 8.8Z" fill="#ebc662" stroke="#c09838" stroke-width="1"/><rect x="1.7" y="3.2" width="10.2" height="5.6" rx="0.6" fill="url(#fg)" stroke="#fffbe4" stroke-width="0.7"/></svg><span class="t" style="left:45.89999999999998px;top:341.30px">oldnewsletters</span>
<svg class="ic" style="left:17.200000000000045px;top:357.24px" width="7" height="8" viewBox="0 0 7 8"><path d="M0.1 0.1L6.6 3.9L0.1 7.7Z" fill="#8a8a8a"/></svg><svg class="ic" style="left:31.799999999999955px;top:357.03999999999996px" width="13.1" height="10.2" viewBox="0 0 13.6 10.4" preserveAspectRatio="none"><path d="M0.7 8.8V1.7Q0.7 0.7 1.7 0.7H4.8L6 1.9H11.9Q12.9 1.9 12.9 2.9V8.8Q12.9 9.7 11.9 9.7H1.7Q0.7 9.7 0.7 8.8Z" fill="#ebc662" stroke="#c09838" stroke-width="1"/><rect x="1.7" y="3.2" width="10.2" height="5.6" rx="0.6" fill="url(#fg)" stroke="#fffbe4" stroke-width="0.7"/></svg><span class="t" style="left:45.89999999999998px;top:356.04px">orphansafe</span>
<svg class="ic" style="left:17.200000000000045px;top:371.975px" width="7" height="8" viewBox="0 0 7 8"><path d="M0.1 0.1L6.6 3.9L0.1 7.7Z" fill="#8a8a8a"/></svg><svg class="ic" style="left:31.799999999999955px;top:371.775px" width="13.1" height="10.2" viewBox="0 0 13.6 10.4" preserveAspectRatio="none"><path d="M0.7 8.8V1.7Q0.7 0.7 1.7 0.7H4.8L6 1.9H11.9Q12.9 1.9 12.9 2.9V8.8Q12.9 9.7 11.9 9.7H1.7Q0.7 9.7 0.7 8.8Z" fill="#ebc662" stroke="#c09838" stroke-width="1"/><rect x="1.7" y="3.2" width="10.2" height="5.6" rx="0.6" fill="url(#fg)" stroke="#fffbe4" stroke-width="0.7"/></svg><span class="t" style="left:45.89999999999998px;top:370.77px">palmermissions</span>
<svg class="ic" style="left:17.200000000000045px;top:386.71000000000004px" width="7" height="8" viewBox="0 0 7 8"><path d="M0.1 0.1L6.6 3.9L0.1 7.7Z" fill="#8a8a8a"/></svg><svg class="ic" style="left:31.799999999999955px;top:386.51px" width="13.1" height="10.2" viewBox="0 0 13.6 10.4" preserveAspectRatio="none"><path d="M0.7 8.8V1.7Q0.7 0.7 1.7 0.7H4.8L6 1.9H11.9Q12.9 1.9 12.9 2.9V8.8Q12.9 9.7 11.9 9.7H1.7Q0.7 9.7 0.7 8.8Z" fill="#ebc662" stroke="#c09838" stroke-width="1"/><rect x="1.7" y="3.2" width="10.2" height="5.6" rx="0.6" fill="url(#fg)" stroke="#fffbe4" stroke-width="0.7"/></svg><span class="t" style="left:45.89999999999998px;top:385.51px">podcast</span>
<svg class="ic" style="left:17.200000000000045px;top:401.445px" width="7" height="8" viewBox="0 0 7 8"><path d="M0.1 0.1L6.6 3.9L0.1 7.7Z" fill="#8a8a8a"/></svg><svg class="ic" style="left:31.799999999999955px;top:401.24499999999995px" width="13.1" height="10.2" viewBox="0 0 13.6 10.4" preserveAspectRatio="none"><path d="M0.7 8.8V1.7Q0.7 0.7 1.7 0.7H4.8L6 1.9H11.9Q12.9 1.9 12.9 2.9V8.8Q12.9 9.7 11.9 9.7H1.7Q0.7 9.7 0.7 8.8Z" fill="#ebc662" stroke="#c09838" stroke-width="1"/><rect x="1.7" y="3.2" width="10.2" height="5.6" rx="0.6" fill="url(#fg)" stroke="#fffbe4" stroke-width="0.7"/></svg><span class="t" style="left:45.89999999999998px;top:400.24px">Power_Prayer</span>
<svg class="ic" style="left:17.200000000000045px;top:416.18px" width="7" height="8" viewBox="0 0 7 8"><path d="M0.1 0.1L6.6 3.9L0.1 7.7Z" fill="#8a8a8a"/></svg><svg class="ic" style="left:31.799999999999955px;top:415.97999999999996px" width="13.1" height="10.2" viewBox="0 0 13.6 10.4" preserveAspectRatio="none"><path d="M0.7 8.8V1.7Q0.7 0.7 1.7 0.7H4.8L6 1.9H11.9Q12.9 1.9 12.9 2.9V8.8Q12.9 9.7 11.9 9.7H1.7Q0.7 9.7 0.7 8.8Z" fill="#ebc662" stroke="#c09838" stroke-width="1"/><rect x="1.7" y="3.2" width="10.2" height="5.6" rx="0.6" fill="url(#fg)" stroke="#fffbe4" stroke-width="0.7"/></svg><span class="t" style="left:45.89999999999998px;top:414.98px">progressreports</span>
<svg class="ic" style="left:17.200000000000045px;top:430.915px" width="7" height="8" viewBox="0 0 7 8"><path d="M0.1 0.1L6.6 3.9L0.1 7.7Z" fill="#8a8a8a"/></svg><svg class="ic" style="left:31.799999999999955px;top:430.715px" width="13.1" height="10.2" viewBox="0 0 13.6 10.4" preserveAspectRatio="none"><path d="M0.7 8.8V1.7Q0.7 0.7 1.7 0.7H4.8L6 1.9H11.9Q12.9 1.9 12.9 2.9V8.8Q12.9 9.7 11.9 9.7H1.7Q0.7 9.7 0.7 8.8Z" fill="#ebc662" stroke="#c09838" stroke-width="1"/><rect x="1.7" y="3.2" width="10.2" height="5.6" rx="0.6" fill="url(#fg)" stroke="#fffbe4" stroke-width="0.7"/></svg><span class="t" style="left:45.89999999999998px;top:429.71px">startdisabilityblog</span>
</div>
<div class="pane" style="left:817px;top:158px;width:370px;height:437px">
<div class="hdr" style="left:0;top:0;width:370px;height:13px"></div>
<span class="t" style="left:3.3px;top:1.1px">Name</span>
<svg class="ic" style="left:120.2px;top:3.6px" width="7" height="5" viewBox="0 0 7 5"><path d="M0.6 4.2L3.5 1L6.4 4.2" fill="none" stroke="#555" stroke-width="1.1"/></svg>
<div class="sep" style="left:130.4px;top:1.5px;height:10px"></div>
<span class="t" style="right:167.7px;top:1.1px">Size</span>
<div class="sep" style="left:205.5px;top:1.5px;height:10px"></div>
<span class="t" style="left:209.5px;top:1.1px">Type</span>
<div class="sep" style="left:280.5px;top:1.5px;height:10px"></div>
<span class="t" style="left:285.3px;top:1.1px">Date</span>
<div class="sep" style="left:357px;top:1.5px;height:10px"></div>
<svg class="ic" style="left:360px;top:2.6px" width="8" height="8" viewBox="0 0 8 8"><rect x="0.5" y="0.5" width="6" height="5.6" fill="none" stroke="#777" stroke-width="0.9"/></svg>
<div class="row" style="top:13.10px;background:#d5d5d5"></div>
<svg class="ic" style="left:1.4px;top:16.099999999999994px" width="13.1" height="10.2" viewBox="0 0 13.6 10.4" preserveAspectRatio="none"><path d="M0.7 8.8V1.7Q0.7 0.7 1.7 0.7H4.8L6 1.9H11.9Q12.9 1.9 12.9 2.9V8.8Q12.9 9.7 11.9 9.7H1.7Q0.7 9.7 0.7 8.8Z" fill="#ebc662" stroke="#c09838" stroke-width="1"/><rect x="1.7" y="3.2" width="10.2" height="5.6" rx="0.6" fill="url(#fg)" stroke="#fffbe4" stroke-width="0.7"/></svg>
<span class="t g" style="left:16.5px;top:15.50px">.smileys</span>
<span class="t g" style="left:179.1px;top:15.50px">4 KB</span>
<span class="t g" style="left:284.1px;top:15.50px">Sep 11 2008</span>
<div class="row" style="top:27.83px;background:#f4f4f4"></div>
<svg class="ic" style="left:1.4px;top:30.834999999999994px" width="13.1" height="10.2" viewBox="0 0 13.6 10.4" preserveAspectRatio="none"><path d="M0.7 8.8V1.7Q0.7 0.7 1.7 0.7H4.8L6 1.9H11.9Q12.9 1.9 12.9 2.9V8.8Q12.9 9.7 11.9 9.7H1.7Q0.7 9.7 0.7 8.8Z" fill="#ebc662" stroke="#c09838" stroke-width="1"/><rect x="1.7" y="3.2" width="10.2" height="5.6" rx="0.6" fill="url(#fg)" stroke="#fffbe4" stroke-width="0.7"/></svg>
<span class="t" style="left:16.5px;top:30.23px">ashiweb</span>
<span class="t" style="left:179.1px;top:30.23px">4 KB</span>
<span class="t" style="left:284.1px;top:30.23px">Mar 28 2010</span>
<svg class="ic" style="left:1.4px;top:45.56999999999999px" width="13.1" height="10.2" viewBox="0 0 13.6 10.4" preserveAspectRatio="none"><path d="M0.7 8.8V1.7Q0.7 0.7 1.7 0.7H4.8L6 1.9H11.9Q12.9 1.9 12.9 2.9V8.8Q12.9 9.7 11.9 9.7H1.7Q0.7 9.7 0.7 8.8Z" fill="#ebc662" stroke="#c09838" stroke-width="1"/><rect x="1.7" y="3.2" width="10.2" height="5.6" rx="0.6" fill="url(#fg)" stroke="#fffbe4" stroke-width="0.7"/></svg>
<span class="t" style="left:16.5px;top:44.97px">ashleycummins</span>
<span class="t" style="left:179.1px;top:44.97px">4 KB</span>
<span class="t" style="left:284.1px;top:44.97px">Oct 26 2010</span>
<div class="row" style="top:57.30px;background:#f4f4f4"></div>
<svg class="ic" style="left:1.4px;top:60.30499999999999px" width="13.1" height="10.2" viewBox="0 0 13.6 10.4" preserveAspectRatio="none"><path d="M0.7 8.8V1.7Q0.7 0.7 1.7 0.7H4.8L6 1.9H11.9Q12.9 1.9 12.9 2.9V8.8Q12.9 9.7 11.9 9.7H1.7Q0.7 9.7 0.7 8.8Z" fill="#ebc662" stroke="#c09838" stroke-width="1"/><rect x="1.7" y="3.2" width="10.2" height="5.6" rx="0.6" fill="url(#fg)" stroke="#fffbe4" stroke-width="0.7"/></svg>
<span class="t" style="left:16.5px;top:59.70px">atlantacounselingcenter</span>
<span class="t" style="left:179.1px;top:59.70px">4 KB</span>
<span class="t" style="left:284.1px;top:59.70px">May 6 21:43</span>
<svg class="ic" style="left:1.4px;top:75.03999999999999px" width="13.1" height="10.2" viewBox="0 0 13.6 10.4" preserveAspectRatio="none"><path d="M0.7 8.8V1.7Q0.7 0.7 1.7 0.7H4.8L6 1.9H11.9Q12.9 1.9 12.9 2.9V8.8Q12.9 9.7 11.9 9.7H1.7Q0.7 9.7 0.7 8.8Z" fill="#ebc662" stroke="#c09838" stroke-width="1"/><rect x="1.7" y="3.2" width="10.2" height="5.6" rx="0.6" fill="url(#fg)" stroke="#fffbe4" stroke-width="0.7"/></svg>
<span class="t" style="left:16.5px;top:74.44px">blog</span>
<span class="t" style="left:179.1px;top:74.44px">4 KB</span>
<span class="t" style="left:284.1px;top:74.44px">May 12 08:11</span>
<div class="row" style="top:86.77px;background:#f4f4f4"></div>
<svg class="ic" style="left:1.4px;top:89.77499999999999px" width="13.1" height="10.2" viewBox="0 0 13.6 10.4" preserveAspectRatio="none"><path d="M0.7 8.8V1.7Q0.7 0.7 1.7 0.7H4.8L6 1.9H11.9Q12.9 1.9 12.9 2.9V8.8Q12.9 9.7 11.9 9.7H1.7Q0.7 9.7 0.7 8.8Z" fill="#ebc662" stroke="#c09838" stroke-width="1"/><rect x="1.7" y="3.2" width="10.2" height="5.6" rx="0.6" fill="url(#fg)" stroke="#fffbe4" stroke-width="0.7"/></svg>
<span class="t" style="left:16.5px;top:89.17px">blog-ash</span>
<span class="t" style="left:179.1px;top:89.17px">4 KB</span>
<span class="t" style="left:284.1px;top:89.17px">Jul 20 2010</span>
<svg class="ic" style="left:1.4px;top:104.50999999999999px" width="13.1" height="10.2" viewBox="0 0 13.6 10.4" preserveAspectRatio="none"><path d="M0.7 8.8V1.7Q0.7 0.7 1.7 0.7H4.8L6 1.9H11.9Q12.9 1.9 12.9 2.9V8.8Q12.9 9.7 11.9 9.7H1.7Q0.7 9.7 0.7 8.8Z" fill="#ebc662" stroke="#c09838" stroke-width="1"/><rect x="1.7" y="3.2" width="10.2" height="5.6" rx="0.6" fill="url(#fg)" stroke="#fffbe4" stroke-width="0.7"/></svg>
<span class="t" style="left:16.5px;top:103.91px">blog23</span>
<span class="t" style="left:179.1px;top:103.91px">4 KB</span>
<span class="t" style="left:284.1px;top:103.91px">Aug 7 2012</span>
<div class="row" style="top:116.24px;background:#f4f4f4"></div>
<svg class="ic" style="left:1.4px;top:119.24499999999999px" width="13.1" height="10.2" viewBox="0 0 13.6 10.4" preserveAspectRatio="none"><path d="M0.7 8.8V1.7Q0.7 0.7 1.7 0.7H4.8L6 1.9H11.9Q12.9 1.9 12.9 2.9V8.8Q12.9 9.7 11.9 9.7H1.7Q0.7 9.7 0.7 8.8Z" fill="#ebc662" stroke="#c09838" stroke-width="1"/><rect x="1.7" y="3.2" width="10.2" height="5.6" rx="0.6" fill="url(#fg)" stroke="#fffbe4" stroke-width="0.7"/></svg>
<span class="t" style="left:16.5px;top:118.64px">blog5</span>
<span class="t" style="left:179.1px;top:118.64px">4 KB</span>
<span class="t" style="left:284.1px;top:118.64px">Aug 7 2012</span>
<svg class="ic" style="left:1.4px;top:133.98px" width="13.1" height="10.2" viewBox="0 0 13.6 10.4" preserveAspectRatio="none"><path d="M0.7 8.8V1.7Q0.7 0.7 1.7 0.7H4.8L6 1.9H11.9Q12.9 1.9 12.9 2.9V8.8Q12.9 9.7 11.9 9.7H1.7Q0.7 9.7 0.7 8.8Z" fill="#ebc662" stroke="#c09838" stroke-width="1"/><rect x="1.7" y="3.2" width="10.2" height="5.6" rx="0.6" fill="url(#fg)" stroke="#fffbe4" stroke-width="0.7"/></svg>
<span class="t" style="left:16.5px;top:133.38px">blog6</span>
<span class="t" style="left:179.1px;top:133.38px">4 KB</span>
<span class="t" style="left:284.1px;top:133.38px">Aug 7 2012</span>
<div class="row" style="top:145.72px;background:#f4f4f4"></div>
<svg class="ic" style="left:1.4px;top:148.715px" width="13.1" height="10.2" viewBox="0 0 13.6 10.4" preserveAspectRatio="none"><path d="M0.7 8.8V1.7Q0.7 0.7 1.7 0.7H4.8L6 1.9H11.9Q12.9 1.9 12.9 2.9V8.8Q12.9 9.7 11.9 9.7H1.7Q0.7 9.7 0.7 8.8Z" fill="#ebc662" stroke="#c09838" stroke-width="1"/><rect x="1.7" y="3.2" width="10.2" height="5.6" rx="0.6" fill="url(#fg)" stroke="#fffbe4" stroke-width="0.7"/></svg>
<span class="t" style="left:16.5px;top:148.12px">blog_old</span>
<span class="t" style="left:179.1px;top:148.12px">4 KB</span>
<span class="t" style="left:284.1px;top:148.12px">May 6 21:43</span>
<svg class="ic" style="left:1.4px;top:163.45px" width="13.1" height="10.2" viewBox="0 0 13.6 10.4" preserveAspectRatio="none"><path d="M0.7 8.8V1.7Q0.7 0.7 1.7 0.7H4.8L6 1.9H11.9Q12.9 1.9 12.9 2.9V8.8Q12.9 9.7 11.9 9.7H1.7Q0.7 9.7 0.7 8.8Z" fill="#ebc662" stroke="#c09838" stroke-width="1"/><rect x="1.7" y="3.2" width="10.2" height="5.6" rx="0.6" fill="url(#fg)" stroke="#fffbe4" stroke-width="0.7"/></svg>
<span class="t" style="left:16.5px;top:162.85px">bp-new</span>
<span class="t" style="left:179.1px;top:162.85px">4 KB</span>
<span class="t" style="left:284.1px;top:162.85px">Jun 28 2010</span>
<div class="row" style="top:175.18px;background:#f4f4f4"></div>
<svg class="ic" style="left:1.4px;top:178.18499999999997px" width="13.1" height="10.2" viewBox="0 0 13.6 10.4" preserveAspectRatio="none"><path d="M0.7 8.8V1.7Q0.7 0.7 1.7 0.7H4.8L6 1.9H11.9Q12.9 1.9 12.9 2.9V8.8Q12.9 9.7 11.9 9.7H1.7Q0.7 9.7 0.7 8.8Z" fill="#ebc662" stroke="#c09838" stroke-width="1"/><rect x="1.7" y="3.2" width="10.2" height="5.6" rx="0.6" fill="url(#fg)" stroke="#fffbe4" stroke-width="0.7"/></svg>
<span class="t" style="left:16.5px;top:177.58px">cgi-bin</span>
<span class="t" style="left:179.1px;top:177.58px">4 KB</span>
<span class="t" style="left:284.1px;top:177.58px">May 6 21:43</span>
<svg class="ic" style="left:1.4px;top:192.92px" width="13.1" height="10.2" viewBox="0 0 13.6 10.4" preserveAspectRatio="none"><path d="M0.7 8.8V1.7Q0.7 0.7 1.7 0.7H4.8L6 1.9H11.9Q12.9 1.9 12.9 2.9V8.8Q12.9 9.7 11.9 9.7H1.7Q0.7 9.7 0.7 8.8Z" fill="#ebc662" stroke="#c09838" stroke-width="1"/><rect x="1.7" y="3.2" width="10.2" height="5.6" rx="0.6" fill="url(#fg)" stroke="#fffbe4" stroke-width="0.7"/></svg>
<span class="t" style="left:16.5px;top:192.32px">cssnphp</span>
<span class="t" style="left:179.1px;top:192.32px">4 KB</span>
<span class="t" style="left:284.1px;top:192.32px">May 6 21:43</span>
<div class="row" style="top:204.66px;background:#f4f4f4"></div>
<svg class="ic" style="left:1.4px;top:207.655px" width="13.1" height="10.2" viewBox="0 0 13.6 10.4" preserveAspectRatio="none"><path d="M0.7 8.8V1.7Q0.7 0.7 1.7 0.7H4.8L6 1.9H11.9Q12.9 1.9 12.9 2.9V8.8Q12.9 9.7 11.9 9.7H1.7Q0.7 9.7 0.7 8.8Z" fill="#ebc662" stroke="#c09838" stroke-width="1"/><rect x="1.7" y="3.2" width="10.2" height="5.6" rx="0.6" fill="url(#fg)" stroke="#fffbe4" stroke-width="0.7"/></svg>
<span class="t" style="left:16.5px;top:207.06px">doverspikelaw</span>
<span class="t" style="left:179.1px;top:207.06px">4 KB</span>
<span class="t" style="left:284.1px;top:207.06px">May 6 21:43</span>
<svg class="ic" style="left:1.4px;top:222.39px" width="13.1" height="10.2" viewBox="0 0 13.6 10.4" preserveAspectRatio="none"><path d="M0.7 8.8V1.7Q0.7 0.7 1.7 0.7H4.8L6 1.9H11.9Q12.9 1.9 12.9 2.9V8.8Q12.9 9.7 11.9 9.7H1.7Q0.7 9.7 0.7 8.8Z" fill="#ebc662" stroke="#c09838" stroke-width="1"/><rect x="1.7" y="3.2" width="10.2" height="5.6" rx="0.6" fill="url(#fg)" stroke="#fffbe4" stroke-width="0.7"/></svg>
<span class="t" style="left:16.5px;top:221.79px">drwilliamdoverspike</span>
<span class="t" style="left:179.1px;top:221.79px">4 KB</span>
<span class="t" style="left:284.1px;top:221.79px">May 6 21:43</span>
<div class="row" style="top:234.12px;background:#f4f4f4"></div>
<svg class="ic" style="left:1.4px;top:237.12499999999997px" width="13.1" height="10.2" viewBox="0 0 13.6 10.4" preserveAspectRatio="none"><path d="M0.7 8.8V1.7Q0.7 0.7 1.7 0.7H4.8L6 1.9H11.9Q12.9 1.9 12.9 2.9V8.8Q12.9 9.7 11.9 9.7H1.7Q0.7 9.7 0.7 8.8Z" fill="#ebc662" stroke="#c09838" stroke-width="1"/><rect x="1.7" y="3.2" width="10.2" height="5.6" rx="0.6" fill="url(#fg)" stroke="#fffbe4" stroke-width="0.7"/></svg>
<span class="t" style="left:16.5px;top:236.52px">forum_</span>
<span class="t" style="left:179.1px;top:236.52px">4 KB</span>
<span class="t" style="left:284.1px;top:236.52px">May 6 21:43</span>
<svg class="ic" style="left:1.4px;top:251.85999999999999px" width="13.1" height="10.2" viewBox="0 0 13.6 10.4" preserveAspectRatio="none"><path d="M0.7 8.8V1.7Q0.7 0.7 1.7 0.7H4.8L6 1.9H11.9Q12.9 1.9 12.9 2.9V8.8Q12.9 9.7 11.9 9.7H1.7Q0.7 9.7 0.7 8.8Z" fill="#ebc662" stroke="#c09838" stroke-width="1"/><rect x="1.7" y="3.2" width="10.2" height="5.6" rx="0.6" fill="url(#fg)" stroke="#fffbe4" stroke-width="0.7"/></svg>
<span class="t" style="left:16.5px;top:251.26px">graphics</span>
<span class="t" style="left:179.1px;top:251.26px">4 KB</span>
<span class="t" style="left:284.1px;top:251.26px">May 6 21:43</span>
<div class="row" style="top:263.60px;background:#f4f4f4"></div>
<svg class="ic" style="left:1.4px;top:266.595px" width="13.1" height="10.2" viewBox="0 0 13.6 10.4" preserveAspectRatio="none"><path d="M0.7 8.8V1.7Q0.7 0.7 1.7 0.7H4.8L6 1.9H11.9Q12.9 1.9 12.9 2.9V8.8Q12.9 9.7 11.9 9.7H1.7Q0.7 9.7 0.7 8.8Z" fill="#ebc662" stroke="#c09838" stroke-width="1"/><rect x="1.7" y="3.2" width="10.2" height="5.6" rx="0.6" fill="url(#fg)" stroke="#fffbe4" stroke-width="0.7"/></svg>
<span class="t" style="left:16.5px;top:266.00px">maps</span>
<span class="t" style="left:179.1px;top:266.00px">4 KB</span>
<span class="t" style="left:284.1px;top:266.00px">May 6 21:43</span>
<svg class="ic" style="left:1.4px;top:281.33000000000004px" width="13.1" height="10.2" viewBox="0 0 13.6 10.4" preserveAspectRatio="none"><path d="M0.7 8.8V1.7Q0.7 0.7 1.7 0.7H4.8L6 1.9H11.9Q12.9 1.9 12.9 2.9V8.8Q12.9 9.7 11.9 9.7H1.7Q0.7 9.7 0.7 8.8Z" fill="#ebc662" stroke="#c09838" stroke-width="1"/><rect x="1.7" y="3.2" width="10.2" height="5.6" rx="0.6" fill="url(#fg)" stroke="#fffbe4" stroke-width="0.7"/></svg>
<span class="t" style="left:16.5px;top:280.73px">marcuslewislive</span>
<span class="t" style="left:179.1px;top:280.73px">4 KB</span>
<span class="t" style="left:284.1px;top:280.73px">May 12 15:10</span>
<div class="row" style="top:293.06px;background:#f4f4f4"></div>
<svg class="ic" style="left:1.4px;top:296.06499999999994px" width="13.1" height="10.2" viewBox="0 0 13.6 10.4" preserveAspectRatio="none"><path d="M0.7 8.8V1.7Q0.7 0.7 1.7 0.7H4.8L6 1.9H11.9Q12.9 1.9 12.9 2.9V8.8Q12.9 9.7 11.9 9.7H1.7Q0.7 9.7 0.7 8.8Z" fill="#ebc662" stroke="#c09838" stroke-width="1"/><rect x="1.7" y="3.2" width="10.2" height="5.6" rx="0.6" fill="url(#fg)" stroke="#fffbe4" stroke-width="0.7"/></svg>
<span class="t" style="left:16.5px;top:295.46px">newsletters</span>
<span class="t" style="left:179.1px;top:295.46px">4 KB</span>
<span class="t" style="left:284.1px;top:295.46px">May 7 07:08</span>
<svg class="ic" style="left:1.4px;top:310.79999999999995px" width="13.1" height="10.2" viewBox="0 0 13.6 10.4" preserveAspectRatio="none"><path d="M0.7 8.8V1.7Q0.7 0.7 1.7 0.7H4.8L6 1.9H11.9Q12.9 1.9 12.9 2.9V8.8Q12.9 9.7 11.9 9.7H1.7Q0.7 9.7 0.7 8.8Z" fill="#ebc662" stroke="#c09838" stroke-width="1"/><rect x="1.7" y="3.2" width="10.2" height="5.6" rx="0.6" fill="url(#fg)" stroke="#fffbe4" stroke-width="0.7"/></svg>
<span class="t" style="left:16.5px;top:310.20px">northpapers</span>
<span class="t" style="left:179.1px;top:310.20px">4 KB</span>
<span class="t" style="left:284.1px;top:310.20px">May 6 21:43</span>
<div class="row" style="top:322.53px;background:#f4f4f4"></div>
<svg class="ic" style="left:1.4px;top:325.53499999999997px" width="13.1" height="10.2" viewBox="0 0 13.6 10.4" preserveAspectRatio="none"><path d="M0.7 8.8V1.7Q0.7 0.7 1.7 0.7H4.8L6 1.9H11.9Q12.9 1.9 12.9 2.9V8.8Q12.9 9.7 11.9 9.7H1.7Q0.7 9.7 0.7 8.8Z" fill="#ebc662" stroke="#c09838" stroke-width="1"/><rect x="1.7" y="3.2" width="10.2" height="5.6" rx="0.6" fill="url(#fg)" stroke="#fffbe4" stroke-width="0.7"/></svg>
<span class="t" style="left:16.5px;top:324.93px">old</span>
<span class="t" style="left:179.1px;top:324.93px">4 KB</span>
<span class="t" style="left:284.1px;top:324.93px">May 6 21:43</span>
<svg class="ic" style="left:1.4px;top:340.27px" width="13.1" height="10.2" viewBox="0 0 13.6 10.4" preserveAspectRatio="none"><path d="M0.7 8.8V1.7Q0.7 0.7 1.7 0.7H4.8L6 1.9H11.9Q12.9 1.9 12.9 2.9V8.8Q12.9 9.7 11.9 9.7H1.7Q0.7 9.7 0.7 8.8Z" fill="#ebc662" stroke="#c09838" stroke-width="1"/><rect x="1.7" y="3.2" width="10.2" height="5.6" rx="0.6" fill="url(#fg)" stroke="#fffbe4" stroke-width="0.7"/></svg>
<span class="t" style="left:16.5px;top:339.67px">oldnewsletters</span>
<span class="t" style="left:179.1px;top:339.67px">4 KB</span>
<span class="t" style="left:284.1px;top:339.67px">May 6 21:43</span>
<div class="row" style="top:352.00px;background:#f4f4f4"></div>
<svg class="ic" style="left:1.4px;top:355.005px" width="13.1" height="10.2" viewBox="0 0 13.6 10.4" preserveAspectRatio="none"><path d="M0.7 8.8V1.7Q0.7 0.7 1.7 0.7H4.8L6 1.9H11.9Q12.9 1.9 12.9 2.9V8.8Q12.9 9.7 11.9 9.7H1.7Q0.7 9.7 0.7 8.8Z" fill="#ebc662" stroke="#c09838" stroke-width="1"/><rect x="1.7" y="3.2" width="10.2" height="5.6" rx="0.6" fill="url(#fg)" stroke="#fffbe4" stroke-width="0.7"/></svg>
<span class="t" style="left:16.5px;top:354.40px">orphansafe</span>
<span class="t" style="left:179.1px;top:354.40px">4 KB</span>
<span class="t" style="left:284.1px;top:354.40px">Oct 26 2010</span>
<svg class="ic" style="left:1.4px;top:369.74px" width="13.1" height="10.2" viewBox="0 0 13.6 10.4" preserveAspectRatio="none"><path d="M0.7 8.8V1.7Q0.7 0.7 1.7 0.7H4.8L6 1.9H11.9Q12.9 1.9 12.9 2.9V8.8Q12.9 9.7 11.9 9.7H1.7Q0.7 9.7 0.7 8.8Z" fill="#ebc662" stroke="#c09838" stroke-width="1"/><rect x="1.7" y="3.2" width="10.2" height="5.6" rx="0.6" fill="url(#fg)" stroke="#fffbe4" stroke-width="0.7"/></svg>
<span class="t" style="left:16.5px;top:369.14px">palmermissions</span>
<span class="t" style="left:179.1px;top:369.14px">4 KB</span>
<span class="t" style="left:284.1px;top:369.14px">May 16 2009</span>
<div class="row" style="top:381.48px;background:#f4f4f4"></div>
<svg class="ic" style="left:1.4px;top:384.475px" width="13.1" height="10.2" viewBox="0 0 13.6 10.4" preserveAspectRatio="none"><path d="M0.7 8.8V1.7Q0.7 0.7 1.7 0.7H4.8L6 1.9H11.9Q12.9 1.9 12.9 2.9V8.8Q12.9 9.7 11.9 9.7H1.7Q0.7 9.7 0.7 8.8Z" fill="#ebc662" stroke="#c09838" stroke-width="1"/><rect x="1.7" y="3.2" width="10.2" height="5.6" rx="0.6" fill="url(#fg)" stroke="#fffbe4" stroke-width="0.7"/></svg>
<span class="t" style="left:16.5px;top:383.88px">podcast</span>
<span class="t" style="left:179.1px;top:383.88px">4 KB</span>
<span class="t" style="left:284.1px;top:383.88px">May 6 21:43</span>
<svg class="ic" style="left:1.4px;top:399.21000000000004px" width="13.1" height="10.2" viewBox="0 0 13.6 10.4" preserveAspectRatio="none"><path d="M0.7 8.8V1.7Q0.7 0.7 1.7 0.7H4.8L6 1.9H11.9Q12.9 1.9 12.9 2.9V8.8Q12.9 9.7 11.9 9.7H1.7Q0.7 9.7 0.7 8.8Z" fill="#ebc662" stroke="#c09838" stroke-width="1"/><rect x="1.7" y="3.2" width="10.2" height="5.6" rx="0.6" fill="url(#fg)" stroke="#fffbe4" stroke-width="0.7"/></svg>
<span class="t" style="left:16.5px;top:398.61px">Power_Prayer</span>
<span class="t" style="left:179.1px;top:398.61px">4 KB</span>
<span class="t" style="left:284.1px;top:398.61px">Jun 27 2015</span>
<div class="row" style="top:410.94px;background:#f4f4f4"></div>
<svg class="ic" style="left:1.4px;top:413.94499999999994px" width="13.1" height="10.2" viewBox="0 0 13.6 10.4" preserveAspectRatio="none"><path d="M0.7 8.8V1.7Q0.7 0.7 1.7 0.7H4.8L6 1.9H11.9Q12.9 1.9 12.9 2.9V8.8Q12.9 9.7 11.9 9.7H1.7Q0.7 9.7 0.7 8.8Z" fill="#ebc662" stroke="#c09838" stroke-width="1"/><rect x="1.7" y="3.2" width="10.2" height="5.6" rx="0.6" fill="url(#fg)" stroke="#fffbe4" stroke-width="0.7"/></svg>
<span class="t" style="left:16.5px;top:413.34px">progressreports</span>
<span class="t" style="left:179.1px;top:413.34px">4 KB</span>
<span class="t" style="left:284.1px;top:413.34px">May 6 21:43</span>
<svg class="ic" style="left:1.4px;top:428.67999999999995px" width="13.1" height="10.2" viewBox="0 0 13.6 10.4" preserveAspectRatio="none"><path d="M0.7 8.8V1.7Q0.7 0.7 1.7 0.7H4.8L6 1.9H11.9Q12.9 1.9 12.9 2.9V8.8Q12.9 9.7 11.9 9.7H1.7Q0.7 9.7 0.7 8.8Z" fill="#ebc662" stroke="#c09838" stroke-width="1"/><rect x="1.7" y="3.2" width="10.2" height="5.6" rx="0.6" fill="url(#fg)" stroke="#fffbe4" stroke-width="0.7"/></svg>
<span class="t" style="left:16.5px;top:428.08px">startdisabilityblog</span>
<span class="t" style="left:179.1px;top:428.08px">4 KB</span>
<span class="t" style="left:284.1px;top:428.08px">May 12 07:16</span>
</div>
<svg class="ic" style="left:554px;top:596.2px" width="90" height="6" viewBox="0 0 90 6"><path d="M0.3 1.2L2.8 4.4L5.3 1.2Z" fill="#27345a"/><path d="M83.8 1.2L86.3 4.4L88.8 1.2Z" fill="#27345a"/><rect x="8.00" y="2.6" width="1" height="1" fill="#6f7688"/><rect x="10.78" y="2.6" width="1" height="1" fill="#6f7688"/><rect x="13.56" y="2.6" width="1" height="1" fill="#6f7688"/><rect x="16.34" y="2.6" width="1" height="1" fill="#6f7688"/><rect x="19.12" y="2.6" width="1" height="1" fill="#6f7688"/><rect x="21.90" y="2.6" width="1" height="1" fill="#6f7688"/><rect x="24.68" y="2.6" width="1" height="1" fill="#6f7688"/><rect x="27.46" y="2.6" width="1" height="1" fill="#6f7688"/><rect x="30.24" y="2.6" width="1" height="1" fill="#6f7688"/><rect x="33.02" y="2.6" width="1" height="1" fill="#6f7688"/><rect x="35.80" y="2.6" width="1" height="1" fill="#6f7688"/><rect x="38.58" y="2.6" width="1" height="1" fill="#6f7688"/><rect x="41.36" y="2.6" width="1" height="1" fill="#6f7688"/><rect x="44.14" y="2.6" width="1" height="1" fill="#6f7688"/><rect x="46.92" y="2.6" width="1" height="1" fill="#6f7688"/><rect x="49.70" y="2.6" width="1" height="1" fill="#6f7688"/><rect x="52.48" y="2.6" width="1" height="1" fill="#6f7688"/><rect x="55.26" y="2.6" width="1" height="1" fill="#6f7688"/><rect x="58.04" y="2.6" width="1" height="1" fill="#6f7688"/><rect x="60.82" y="2.6" width="1" height="1" fill="#6f7688"/><rect x="63.60" y="2.6" width="1" height="1" fill="#6f7688"/><rect x="66.38" y="2.6" width="1" height="1" fill="#6f7688"/><rect x="69.16" y="2.6" width="1" height="1" fill="#6f7688"/><rect x="71.94" y="2.6" width="1" height="1" fill="#6f7688"/><rect x="74.72" y="2.6" width="1" height="1" fill="#6f7688"/><rect x="77.50" y="2.6" width="1" height="1" fill="#6f7688"/><rect x="80.28" y="2.6" width="1" height="1" fill="#6f7688"/><rect x="44" y="2" width="2" height="2" fill="#777"/></svg>
<div class="pane log" style="left:13px;top:603px;width:1170px;height:104px;border-left:1px solid #cfcfcf;box-sizing:border-box">
<span style="left:6.6px;top:-4.50px;color:#4e7a21">150 Accepted data connection</span>
<span style="left:6.6px;top:6.90px;color:#4e7a21;letter-spacing:0.19px">226-Options: -a -l</span>
<span style="left:6.6px;top:18.30px;color:#4e7a21">226 188 matches total</span>
<span style="left:28.2px;top:29.70px;color:#1f5af2">NOOP</span>
<span style="left:6.6px;top:41.10px;color:#4e7a21">200 Zzz...</span>
<span style="left:28.2px;top:52.50px;color:#1f5af2">NOOP</span>
<span style="left:6.6px;top:63.90px;color:#4e7a21">200 Zzz...</span>
<span style="left:28.2px;top:75.30px;color:#1f5af2">NOOP</span>
<span style="left:6.6px;top:86.70px;color:#4e7a21">200 Zzz...</span>
</div>
<div style="left:8px;top:706px;width:1172px;height:20px;background:#d3d3d3"></div>
<div style="left:8px;top:706px;width:1172px;height:2.2px;background:#e8e8e8"></div>
<div style="left:8px;top:708px;width:1172px;height:1.4px;background:#a2a2a2"></div>
<div style="left:15.5px;top:708px;width:28.4px;height:14.9px;background:#f5f5f5;border:1px solid #999;border-top:none;box-sizing:border-box;box-shadow:0 .5px .5px rgba(0,0,0,.2)"></div>
<div style="left:43.9px;top:709.4px;width:39.8px;height:13.2px;background:#dcdcdc;border-right:1px solid #aaa;border-bottom:1px solid #b2b2b2;box-sizing:border-box"></div>
<span class="t" style="left:22.3px;top:709.9px">Log</span>
<span class="t" style="left:51px;top:710.3px">Queue</span>
<div style="left:8px;top:725.6px;width:1172px;height:12px;background:#e1e1e1;border-top:1px solid #ededed;box-sizing:border-box"></div>
<span class="t" style="left:17.5px;top:727.2px">Local Listing: 11 object(s), 14.92 MB, Disk Space Available: 35.5 GB</span>
<span class="t" style="left:861px;top:727.2px">Binary</span>
<div style="left:1093.3px;top:732px;width:79px;height:8px;border-radius:4px;background:#d5d5d5;border:1px solid #b4b4b4;box-sizing:border-box"></div>
</body></html>
